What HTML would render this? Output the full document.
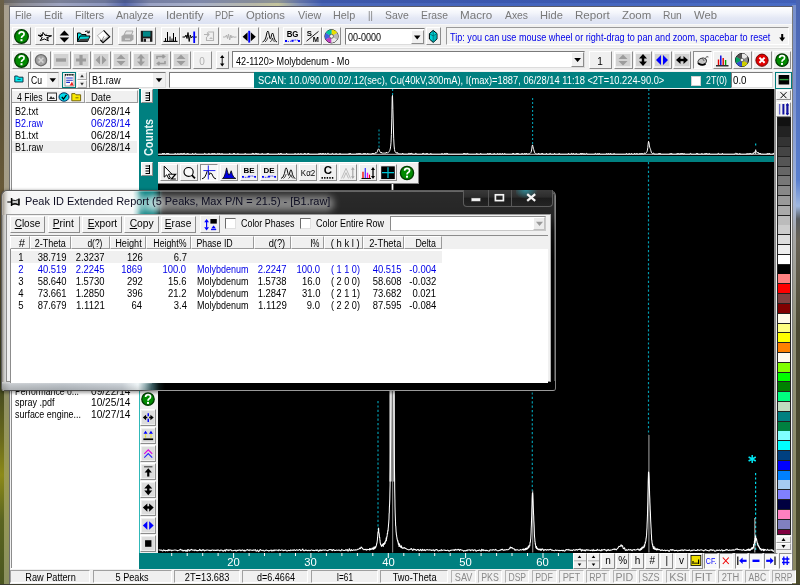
<!DOCTYPE html><html><head><meta charset="utf-8"><title>XRD</title><style>
*{box-sizing:border-box;margin:0;padding:0}
html,body{width:800px;height:585px;overflow:hidden}
#w{position:absolute;left:0;top:0;width:800px;height:585px;overflow:hidden;filter:blur(0.4px)}
body{position:relative;font-family:"Liberation Sans",sans-serif;font-size:11px;color:#000;background:#5b76bd}
.a{position:absolute}
.t{position:absolute;white-space:nowrap;line-height:1}
.btn{position:absolute;background:#f0f0f0;border:1px solid;border-color:#fff #8c8c8c #8c8c8c #fff;overflow:hidden}
.btn svg,.btnp svg,.fl svg{position:absolute;left:0;top:0}
.btnp{position:absolute;background:#f8f8f8;border:1px solid;border-color:#8c8c8c #fff #fff #8c8c8c;overflow:hidden}
.fl{position:absolute;overflow:hidden}
.sunk{position:absolute;background:#fff;border:1px solid;border-color:#7a7a7a #dcdcdc #dcdcdc #7a7a7a}
.cell{position:absolute;background:#f0f0f0;border:1px solid;border-color:#fff #9a9a9a #9a9a9a #fff}
.sb{position:absolute;background:#f0f0f0;border:1px solid;border-color:#a0a0a0 #fff #fff #a0a0a0}
</style></head><body><div id="w">
<div class="a" style="left:0px;top:0px;width:800px;height:7px;background:linear-gradient(90deg,#7c7466 0,#8c8c94 20px,#9ea4c0 60px,#8a94bc 105px,#5566a8 125px,#9aa2c4 150px,#a8b0c8 200px,#b8b8a8 255px,#c4c49c 278px,#8090b8 300px,#4a66b8 322px,#4464bc 500px,#4a6cc4 800px);"></div>
<div class="a" style="left:0px;top:0px;width:800px;height:2.5px;background:linear-gradient(90deg,rgba(60,60,60,.35),rgba(40,60,140,.35) 320px,rgba(40,60,150,.25));"></div>
<div class="a" style="left:0px;top:0px;width:4px;height:585px;background:linear-gradient(#6a6048,#5a5034 100px,#6a5a38 200px,#5a5230 300px,#3e4420 380px,#6a6a1c 440px,#8c8a18 475px,#5a6420 520px,#4a5620 585px);"></div>
<div class="a" style="left:3.5px;top:5px;width:5.5px;height:580px;background:linear-gradient(#a8a090,#a49c86 200px,#98947a 320px,#8c8c66 380px,#9c9c52 470px,#8a9060 580px);"></div>
<div class="a" style="left:796px;top:0px;width:4px;height:585px;background:linear-gradient(#4a64b0,#5a80d0 180px,#a0b8e0 206px,#585c60 219px,#6a6458 240px,#4c4a34 330px,#4a4a2c 585px);"></div>
<div class="a" style="left:792px;top:5px;width:4px;height:580px;background:linear-gradient(#7890cc,#7c94d0 100px,#a8b8d8 200px,#a8a8a8 228px,#909078 330px,#8a8860 580px);"></div>
<div class="a" style="left:9px;top:5.5px;width:783.5px;height:578.5px;background:#f0f0f0;border-left:1px solid #6a6a6a;border-top:1px solid #5a5a66;border-right:1px solid #7a7a7a"></div>
<div class="a" style="left:10px;top:6.5px;width:781.5px;height:17.5px;background:linear-gradient(#ffffff,#f3f5fb 35%,#e4e8f5 65%,#dce2f3);"></div>
<div class="a" style="left:10px;top:24px;width:781.5px;height:1px;background:#f8f8f8;"></div>
<div class="t" style="left:15.00px;top:10.29px;font-size:11px;color:#787878;transform:scaleX(0.942);transform-origin:left center;">File</div>
<div class="t" style="left:44.00px;top:10.29px;font-size:11px;color:#787878;transform:scaleX(0.976);transform-origin:left center;">Edit</div>
<div class="t" style="left:74.50px;top:10.29px;font-size:11px;color:#787878;transform:scaleX(0.975);transform-origin:left center;">Filters</div>
<div class="t" style="left:115.50px;top:10.29px;font-size:11px;color:#787878;transform:scaleX(0.958);transform-origin:left center;">Analyze</div>
<div class="t" style="left:165.50px;top:10.29px;font-size:11px;color:#787878;transform:scaleX(1.057);transform-origin:left center;">Identify</div>
<div class="t" style="left:215.00px;top:10.29px;font-size:11px;color:#787878;transform:scaleX(0.850);transform-origin:left center;">PDF</div>
<div class="t" style="left:246.20px;top:10.29px;font-size:11px;color:#787878;transform:scaleX(1.024);transform-origin:left center;">Options</div>
<div class="t" style="left:297.50px;top:10.29px;font-size:11px;color:#787878;transform:scaleX(0.981);transform-origin:left center;">View</div>
<div class="t" style="left:333.20px;top:10.29px;font-size:11px;color:#787878;transform:scaleX(0.986);transform-origin:left center;">Help</div>
<div class="t" style="left:368.20px;top:10.29px;font-size:11px;color:#787878;transform:scaleX(0.840);transform-origin:left center;">||</div>
<div class="t" style="left:385.00px;top:10.29px;font-size:11px;color:#787878;transform:scaleX(0.945);transform-origin:left center;">Save</div>
<div class="t" style="left:420.50px;top:10.29px;font-size:11px;color:#787878;transform:scaleX(0.940);transform-origin:left center;">Erase</div>
<div class="t" style="left:460.20px;top:10.29px;font-size:11px;color:#787878;transform:scaleX(1.057);transform-origin:left center;">Macro</div>
<div class="t" style="left:505.00px;top:10.29px;font-size:11px;color:#787878;transform:scaleX(0.940);transform-origin:left center;">Axes</div>
<div class="t" style="left:540.20px;top:10.29px;font-size:11px;color:#787878;transform:scaleX(1.008);transform-origin:left center;">Hide</div>
<div class="t" style="left:575.20px;top:10.29px;font-size:11px;color:#787878;transform:scaleX(1.054);transform-origin:left center;">Report</div>
<div class="t" style="left:621.50px;top:10.29px;font-size:11px;color:#787878;transform:scaleX(1.039);transform-origin:left center;">Zoom</div>
<div class="t" style="left:663.20px;top:10.29px;font-size:11px;color:#787878;transform:scaleX(0.932);transform-origin:left center;">Run</div>
<div class="t" style="left:694.00px;top:10.29px;font-size:11px;color:#787878;transform:scaleX(1.026);transform-origin:left center;">Web</div>
<div class="a" style="left:10px;top:47px;width:782px;height:1px;background:#fafafa;"></div>
<div class="a" style="left:10px;top:48px;width:782px;height:1px;background:#dcdcdc;"></div>
<div class="a" style="left:10px;top:70px;width:782px;height:1px;background:#fafafa;"></div>
<div class="btn" style="left:11.5px;top:27px;width:19px;height:18px;"><svg width="17" height="16" viewBox="0 0 17 16" ><circle cx="8.5" cy="8.5" r="6.8" fill="#008a00" stroke="#003c00" stroke-width="1.3"/><path d="M6.1 6.3 Q6.1 3.9000000000000004 8.5 3.9000000000000004 Q11.1 3.9000000000000004 11.1 6.1 Q11.1 7.5 9.4 8.3 Q8.5 8.9 8.5 10.1" fill="none" stroke="#fff" stroke-width="1.65" stroke-linecap="butt"/><rect x="7.5" y="11.2" width="2" height="2" fill="#fff"/></svg></div>
<div class="btn" style="left:35px;top:27px;width:19px;height:18px;"><svg width="17" height="16" viewBox="0 0 17 16" ><path d="M2.2 7.2 L6.4 7.6 L7 4.4 L9.2 7.4 L15.6 7.8 L10.8 9.6 L12.4 12.8 L8.4 11 L4.2 12.6 L6.2 9.4 Z" fill="none" stroke="#000" stroke-width="1"/><path d="M6.4 7.6 L4.6 5.6 M9.2 7.4 L10.6 5.8 M10.8 9.6 L13 10.2" stroke="#000" stroke-width="0.8"/></svg></div>
<div class="btn" style="left:54.6px;top:27px;width:19px;height:18px;"><svg width="17" height="16" viewBox="0 0 17 16" ><path d="M8.4 2.6 L13.2 7.4 L3.6 7.4 Z M8.4 14.4 L13.2 9.4 L3.6 9.4 Z" fill="#000"/></svg></div>
<div class="btn" style="left:74.3px;top:27px;width:19px;height:18px;"><svg width="17" height="16" viewBox="0 0 17 16" ><path d="M2.5 13.5 L2.5 5 L5.5 5 L6.5 6.5 L11 6.5 L11 8" fill="#00e0e0" stroke="#000" stroke-width="1"/><path d="M2.5 13.5 L5 8 L15 8 L12.5 13.5 Z" fill="#00d8d8" stroke="#000" stroke-width="1"/><path d="M3 13.5 L12.5 13.5 L14 10.5 L5 11 Z" fill="#404040"/><path d="M10 3.5 Q12.5 2 14 4.5 M14.2 2.6 L14.2 5 L12 4.6" fill="none" stroke="#000" stroke-width="0.9"/></svg></div>
<div class="btn" style="left:94px;top:27px;width:19px;height:18px;"><svg width="17" height="16" viewBox="0 0 17 16" ><path d="M2.4 7.6 L8.6 2.6 L14.4 8.6 L8 14.2 Z" fill="#fff" stroke="#909090" stroke-width="0.7"/><path d="M9 2.8 L14.4 8.6 L8 14.2 L6.2 12.4 L12 8.6 Z" fill="#c8c8c8"/><path d="M8.6 2.4 L14.7 8.6 L8 14.6 L5.4 12" fill="none" stroke="#000" stroke-width="1.2"/><path d="M8 14.2 Q6.6 11 9 8.4" fill="none" stroke="#666" stroke-width="0.7"/></svg></div>
<div class="btn" style="left:117.6px;top:27px;width:19px;height:18px;"><svg width="17" height="16" viewBox="0 0 17 16" ><path d="M5 7 L7 3 L14 3 L12.5 7 Z" fill="#e4e4e4" stroke="#a0a0a0" stroke-width="0.9"/><path d="M2.5 8 L5 6.8 L14.5 6.8 L14.5 11.5 L12 13.5 L2.5 13.5 Z" fill="#a6a6a6"/><rect x="6" y="10.5" width="5" height="1.3" fill="#dcdcdc"/></svg></div>
<div class="btn" style="left:137.4px;top:27px;width:19px;height:18px;"><svg width="17" height="16" viewBox="0 0 17 16" ><rect x="2.8" y="2.8" width="11.6" height="11" fill="#1c1c1c"/><rect x="5" y="3.4" width="7.4" height="5.2" fill="#008888"/><rect x="5" y="10.4" width="7" height="3.4" fill="#e8e8e8"/><rect x="5.6" y="10.8" width="2.4" height="3" fill="#1c1c1c"/></svg></div>
<div class="btn" style="left:160.6px;top:27px;width:19px;height:18px;"><svg width="17" height="16" viewBox="0 0 17 16" ><path d="M1.5 13.4 H15.5" stroke="#000" stroke-width="1.1"/><path d="M3.5 13 V10 M5.5 13 V4 M8 13 V8.5 M10 13 V10.5 M11.5 13 V5 M13.5 13 V9" stroke="#000" stroke-width="1"/></svg></div>
<div class="btn" style="left:180.2px;top:27px;width:19px;height:18px;"><svg width="17" height="16" viewBox="0 0 17 16" ><path d="M1.5 9 H4 L5 7 L6 10.5 L7 4.5 L8.2 13.5 L9.3 7 L10.3 10 L11.2 8.6 L12.5 9.2 L15.8 9" fill="none" stroke="#000" stroke-width="1"/><path d="M13.2 3.5 V15" stroke="#0000ff" stroke-width="1.8"/></svg></div>
<div class="btn" style="left:200px;top:27px;width:19px;height:18px;"><svg width="17" height="16" viewBox="0 0 17 16" ><path d="M7 4 H12.5 V12.5 H5.5 V9" fill="none" stroke="#b4b4b4" stroke-width="1.1"/><path d="M3 6.5 H7.5 M6 4.5 L8 6.5 L6 8.5" fill="none" stroke="#b4b4b4" stroke-width="1.1"/><path d="M8 11 L10 9 L12 11 Z" fill="#bcbcbc"/></svg></div>
<div class="btn" style="left:219.8px;top:27px;width:19px;height:18px;"><svg width="17" height="16" viewBox="0 0 17 16" ><path d="M2 9 H4.5 L5.5 7 L6.5 10.5 L7.5 6 L8.7 12 L9.8 7 L10.8 10 L11.7 8.4 L13 9.2 L15.5 9" fill="none" stroke="#b0b0b0" stroke-width="1"/></svg></div>
<div class="btn" style="left:239.8px;top:27px;width:19px;height:18px;"><svg width="17" height="16" viewBox="0 0 17 16" ><path d="M8.2 2.8 V14.6" stroke="#0000ff" stroke-width="1.9"/><path d="M1.6 8.7 L6.6 4.2 V13.2 Z M14.8 8.7 L9.8 4.2 V13.2 Z" fill="#000"/></svg></div>
<div class="btn" style="left:259.5px;top:27px;width:19px;height:18px;"><svg width="17" height="16" viewBox="0 0 17 16" ><path d="M1.5 14 Q4 13.5 5 9 Q6 3 6.8 3 Q7.6 3 8.6 9 Q9.3 12.5 10 9.5 Q10.8 5 11.5 5 Q12.3 5 13.2 10 Q14 13.8 16 14" fill="none" stroke="#000" stroke-width="0.95"/><path d="M4 14 Q6 13 6.8 9.5 M9.2 14 Q10.8 13 11.5 10 Q12 13 13.6 14" fill="none" stroke="#000" stroke-width="0.7"/></svg></div>
<div class="btn" style="left:283px;top:27px;width:19px;height:18px;"><svg width="17" height="16" viewBox="0 0 17 16" ><text x="8.6" y="9.4" font-size="9" font-weight="bold" text-anchor="middle" font-family="Liberation Sans" fill="#000" textLength="11.8" lengthAdjust="spacingAndGlyphs">BG</text><path d="M1.5 12.8 Q5 14.2 8.5 12.6 Q12 11.4 15.5 12.8" fill="none" stroke="#0000ff" stroke-width="0.9" stroke-dasharray="1.3 1"/><rect x="1" y="12" width="2" height="2" fill="#0000ff"/><rect x="7.5" y="11.8" width="2" height="2" fill="#0000ff"/><rect x="14" y="12" width="2" height="2" fill="#0000ff"/></svg></div>
<div class="btn" style="left:302.6px;top:27px;width:19px;height:18px;"><svg width="17" height="16" viewBox="0 0 17 16" ><text x="5.4" y="7.6" font-size="7.8" font-weight="bold" text-anchor="middle" font-family="Liberation Sans" fill="#000">S</text><text x="11.8" y="14.2" font-size="7.4" font-weight="bold" text-anchor="middle" font-family="Liberation Sans" fill="#000">M</text><path d="M2.5 13.2 L14.5 3.4" stroke="#000" stroke-width="0.9"/></svg></div>
<div class="btn" style="left:322.4px;top:27px;width:19px;height:18px;"><svg width="17" height="16" viewBox="0 0 17 16" ><circle cx="8.5" cy="8.3" r="6.6" fill="#c8c8c8" stroke="#000" stroke-width="0.9"/><path d="M8.5 8.3 L8.5 1.7 A6.6 6.6 0 0 1 14.2 5 Z" fill="#e8e000"/><path d="M8.5 8.3 L2.8 5 A6.6 6.6 0 0 1 8.5 1.7 Z" fill="#00c8a0"/><path d="M8.5 8.3 L2.8 11.6 A6.6 6.6 0 0 1 2.8 5 Z" fill="#4060e0"/><path d="M8.5 8.3 L8.5 14.9 A6.6 6.6 0 0 1 2.8 11.6 Z" fill="#c040c0"/><path d="M8.5 8.3 L14.2 11.6 A6.6 6.6 0 0 1 8.5 14.9 Z" fill="#e8e8e8"/><path d="M8.5 8.3 L14.2 5 A6.6 6.6 0 0 1 14.2 11.6 Z" fill="#b8b8b8"/><circle cx="8.5" cy="8.3" r="2" fill="#f0f0f0" stroke="#444" stroke-width="0.7"/></svg></div>
<div class="sunk" style="left:345px;top:28px;width:79.5px;height:17px"></div>
<div class="t" style="left:348.00px;top:33.04px;font-size:10px;color:#000;transform:scaleX(0.899);transform-origin:left center;">00-0000</div>
<div class="btn" style="left:411px;top:30px;width:12.5px;height:14px;"><svg width="10" height="12" viewBox="0 0 10 12" ><path d="M2 4.5 H8.5 L5.2 8.5 Z" fill="#000"/></svg></div>
<div class="btn" style="left:426px;top:27px;width:14.5px;height:18px;"><svg width="13" height="16" viewBox="0 0 13 16" ><path d="M6.2 2.4 L10 5.6 L10 11 L6.2 14.4 L2.4 11 L2.4 5.6 Z" fill="#00d4d8" stroke="#000" stroke-width="1"/><path d="M6.2 2.4 V14.4 M2.4 5.6 L6.2 8 L10 5.6" fill="none" stroke="#005c60" stroke-width="0.8"/><path d="M6.2 8 L10 5.6 L10 11 L6.2 14.4 Z" fill="#009ca4" opacity="0.55"/></svg></div>
<div class="sunk" style="left:445.5px;top:27px;width:343px;height:18px;background:#f4f4f4;border-color:#9a9a9a #fff #fff #9a9a9a"></div>
<div class="t" style="left:449.60px;top:33.04px;font-size:10px;color:#0000e8;transform:scaleX(0.910);transform-origin:left center;">Tip: you can use mouse wheel or right-drag to pan and zoom, spacebar to reset</div>
<svg class="a" style="left:776px;top:30px" width="12" height="13" viewBox="0 0 12 13"><path d="M6.2 4 V9" stroke="#000" stroke-width="2"/><path d="M3.2 7.6 H9.2 L6.2 11.4 Z" fill="#000"/></svg>
<div class="btn" style="left:11.5px;top:50.5px;width:19px;height:18px;"><svg width="17" height="16" viewBox="0 0 17 16" ><circle cx="8.5" cy="8.5" r="6.8" fill="#008a00" stroke="#003c00" stroke-width="1.3"/><path d="M6.1 6.3 Q6.1 3.9000000000000004 8.5 3.9000000000000004 Q11.1 3.9000000000000004 11.1 6.1 Q11.1 7.5 9.4 8.3 Q8.5 8.9 8.5 10.1" fill="none" stroke="#fff" stroke-width="1.65" stroke-linecap="butt"/><rect x="7.5" y="11.2" width="2" height="2" fill="#fff"/></svg></div>
<div class="btn" style="left:32px;top:50.5px;width:18.5px;height:18px;"><svg width="16" height="16" viewBox="0 0 16 16" ><circle cx="8" cy="8.2" r="5.6" fill="#a4a4a4" stroke="#6c6c6c" stroke-width="1.3"/><path d="M5.6 5.8 L10.4 10.6 M10.4 5.8 L5.6 10.6" stroke="#d4d4d4" stroke-width="1.5"/></svg></div>
<div class="btn" style="left:52px;top:50.5px;width:18.5px;height:18px;"><svg width="16" height="16" viewBox="0 0 16 16" ><rect x="1" y="2" width="14.4" height="12.2" fill="#d2d2d2"/><rect x="3" y="6.3" width="10" height="3.4" fill="#9c9c9c"/></svg></div>
<div class="btn" style="left:72px;top:50.5px;width:18.5px;height:18px;"><svg width="16" height="16" viewBox="0 0 16 16" ><rect x="1" y="2" width="14.4" height="12.2" fill="#d2d2d2"/><path d="M3 8 H13 M8 3 V13" stroke="#9c9c9c" stroke-width="3.2"/></svg></div>
<div class="btn" style="left:92px;top:50.5px;width:18.5px;height:18px;"><svg width="16" height="16" viewBox="0 0 16 16" ><rect x="1" y="2" width="14.4" height="12.2" fill="#d2d2d2"/><path d="M2.5 8 L7 3.5 V12.5 Z M13.5 8 L9 3.5 V12.5 Z" fill="#9c9c9c"/></svg></div>
<div class="btn" style="left:112px;top:50.5px;width:18.5px;height:18px;"><svg width="16" height="16" viewBox="0 0 16 16" ><rect x="1" y="2" width="14.4" height="12.2" fill="#d2d2d2"/><path d="M8 2.5 L12.5 7 H3.5 Z M8 13.5 L12.5 9 H3.5 Z" fill="#9c9c9c"/></svg></div>
<div class="btn" style="left:132px;top:50.5px;width:18.5px;height:18px;"><svg width="16" height="16" viewBox="0 0 16 16" ><rect x="1" y="2" width="14.4" height="12.2" fill="#d2d2d2"/><path d="M8 2 L12 6.5 H4 Z M8 14 L12 9.5 H4 Z" fill="#9c9c9c"/><path d="M8 5 V11" stroke="#9c9c9c" stroke-width="2.4"/></svg></div>
<div class="btn" style="left:152px;top:50.5px;width:18.5px;height:18px;"><svg width="16" height="16" viewBox="0 0 16 16" ><rect x="1" y="2" width="14.4" height="12.2" fill="#d2d2d2"/><path d="M4 7 V4.5 H11 M9.5 2.8 L11.6 4.5 L9.5 6.2 M12 9 V11.5 H5 M6.5 9.8 L4.4 11.5 L6.5 13.2" fill="none" stroke="#9c9c9c" stroke-width="1.6"/></svg></div>
<div class="btn" style="left:172px;top:50.5px;width:18.5px;height:18px;"><svg width="16" height="16" viewBox="0 0 16 16" ><rect x="1" y="2" width="14.4" height="12.2" fill="#d2d2d2"/><path d="M8 2.5 L12.5 7 H3.5 Z M8 13.5 L12.5 9 H3.5 Z" fill="#9c9c9c"/></svg></div>
<div class="btn" style="left:192.5px;top:50.5px;width:19.5px;height:18px;"></div>
<div class="t" style="left:199.22px;top:57.14px;font-size:10px;color:#b0b0b0;">0</div>
<div class="btn" style="left:216px;top:50.5px;width:12.5px;height:18px;"><svg width="10" height="16" viewBox="0 0 10 16" ><path d="M5.2 3 L7.4 6 H3 Z M5.2 14.6 L7.4 11.6 H3 Z" fill="#000"/><path d="M5.2 5.5 V12" stroke="#000" stroke-width="0.9"/></svg></div>
<div class="sunk" style="left:231.5px;top:51px;width:353.5px;height:17.3px"></div>
<div class="t" style="left:236.20px;top:57.14px;font-size:10px;color:#000;transform:scaleX(0.911);transform-origin:left center;">42-1120&gt; Molybdenum - Mo</div>
<div class="btn" style="left:570.5px;top:51.5px;width:13px;height:15px;"><svg width="11" height="13" viewBox="0 0 11 13" ><path d="M2.2 5 H9 L5.6 9 Z" fill="#000"/></svg></div>
<div class="btn" style="left:589px;top:50.5px;width:23px;height:18px;"></div>
<div class="t" style="left:597.22px;top:57.14px;font-size:10px;color:#000;">1</div>
<div class="btn" style="left:614px;top:50.5px;width:18.5px;height:18px;"><svg width="16" height="16" viewBox="0 0 16 16" ><rect x="1" y="2" width="14.4" height="12.2" fill="#d2d2d2"/><path d="M8 2.5 L12.5 7 H3.5 Z M8 13.5 L12.5 9 H3.5 Z" fill="#9c9c9c"/></svg></div>
<div class="btn" style="left:633.6px;top:50.5px;width:18.5px;height:18px;"><svg width="16" height="16" viewBox="0 0 16 16" ><rect x="1" y="2" width="14.4" height="12.2" fill="#d2d2d2"/><path d="M8 2 L12 6.5 H4 Z M8 14 L12 9.5 H4 Z" fill="#000"/><path d="M8 5 V11" stroke="#000" stroke-width="2.4"/></svg></div>
<div class="btn" style="left:653.2px;top:50.5px;width:18.5px;height:18px;"><svg width="16" height="16" viewBox="0 0 16 16" ><rect x="1" y="2" width="14.4" height="12.2" fill="#d2d2d2"/><path d="M2 8 L7 3 V13 Z M14 8 L9 3 V13 Z" fill="#0000ff"/></svg></div>
<div class="btn" style="left:672.8px;top:50.5px;width:18.5px;height:18px;"><svg width="16" height="16" viewBox="0 0 16 16" ><rect x="1" y="2" width="14.4" height="12.2" fill="#d2d2d2"/><path d="M2 8 L6.5 4 V12 Z M14 8 L9.5 4 V12 Z" fill="#000"/><path d="M5 8 H11" stroke="#000" stroke-width="2.4"/></svg></div>
<div class="btnp" style="left:693px;top:50.5px;width:18.5px;height:18px;"><svg width="16" height="16" viewBox="0 0 16 16" ><ellipse cx="8.2" cy="9.4" rx="4.4" ry="3.3" fill="#c4c4c4" stroke="#222" stroke-width="0.9" transform="rotate(-22 8.2 9.4)"/><path d="M4 11.2 Q7.4 14 11.6 12" fill="none" stroke="#000" stroke-width="1.7"/><path d="M8.4 6.4 L10.2 9" stroke="#333" stroke-width="0.7"/><path d="M11.4 6 Q13 3.8 14.4 5" fill="none" stroke="#222" stroke-width="0.8"/></svg></div>
<div class="btn" style="left:713px;top:50.5px;width:18.5px;height:18px;"><svg width="16" height="16" viewBox="0 0 16 16" ><path d="M2 13.8 H14.5" stroke="#000" stroke-width="1.2"/><path d="M4.5 13 V7.5" stroke="#e00000" stroke-width="1.4"/><path d="M6.8 13 V3.5" stroke="#0000e0" stroke-width="1.4"/><path d="M9.2 13 V6" stroke="#e00000" stroke-width="1.4"/><path d="M11.6 13 V8" stroke="#00a000" stroke-width="1.4"/></svg></div>
<div class="btn" style="left:733px;top:50.5px;width:18.5px;height:18px;"><svg width="16" height="16" viewBox="0 0 16 16" ><circle cx="8" cy="8" r="6.5" fill="#909090" stroke="#000" stroke-width="1"/><path d="M8 8 L8 1.5 A6.5 6.5 0 0 1 13.6 4.7 Z" fill="#e8e8e8"/><path d="M8 8 L2.4 11.3 A6.5 6.5 0 0 1 2.4 4.7 Z" fill="#00a060"/><path d="M8 8 L8 14.5 A6.5 6.5 0 0 1 2.4 11.3 Z" fill="#3050d0"/><path d="M8 8 L13.6 11.3 A6.5 6.5 0 0 1 8 14.5 Z" fill="#d0d000"/><path d="M8 8 L2.4 4.7 A6.5 6.5 0 0 1 8 1.5 Z" fill="#505050"/><circle cx="8" cy="8" r="1.8" fill="#f0f0f0" stroke="#333" stroke-width="0.6"/></svg></div>
<div class="btn" style="left:753px;top:50.5px;width:18.5px;height:18px;"><svg width="16" height="16" viewBox="0 0 16 16" ><circle cx="8" cy="8.2" r="6.1" fill="#e00000" stroke="#700000" stroke-width="1"/><path d="M5.4 5.6 L10.6 10.8 M10.6 5.6 L5.4 10.8" stroke="#fff" stroke-width="2"/></svg></div>
<div class="btn" style="left:772.5px;top:50.5px;width:18.5px;height:18px;"><svg width="16" height="16" viewBox="0 0 16 16" ><circle cx="8" cy="8.2" r="6.2" fill="#008a00" stroke="#003c00" stroke-width="1.3"/><path d="M5.6 5.999999999999999 Q5.6 3.5999999999999996 8 3.5999999999999996 Q10.6 3.5999999999999996 10.6 5.799999999999999 Q10.6 7.199999999999999 8.9 7.999999999999999 Q8 8.6 8 9.799999999999999" fill="none" stroke="#fff" stroke-width="1.65" stroke-linecap="butt"/><rect x="7" y="10.899999999999999" width="2" height="2" fill="#fff"/></svg></div>
<svg class="a" style="left:13.7px;top:75.3px" width="10" height="8" viewBox="0 0 10 8"><path d="M0.8 7 V1 H3.6 L4.6 2.2 H9 V7 Z" fill="#00e8ec" stroke="#103848" stroke-width="1"/><path d="M3.4 4.4 H6.6" stroke="#103848" stroke-width="0.9"/></svg>
<div class="sunk" style="left:28px;top:72px;width:31px;height:16px"></div>
<div class="t" style="left:31.00px;top:76.14px;font-size:10px;color:#000;transform:scaleX(0.860);transform-origin:left center;">Cu</div>
<div class="btn" style="left:46.5px;top:73px;width:11.5px;height:14px;border-color:#f0f0f0"><svg width="10" height="12" viewBox="0 0 10 12" ><path d="M1.5 4.2 H8 L4.8 8.2 Z" fill="#000"/></svg></div>
<div class="a" style="left:62px;top:71.5px;width:14px;height:16.5px;background:#f0f0f0;border:1.5px solid #007c7c"></div>
<svg class="a" style="left:63.5px;top:73px" width="11" height="14" viewBox="0 0 11 14"><rect x="1" y="1.6" width="9" height="11.4" fill="#fff" stroke="#666" stroke-width="0.6"/><path d="M1 1.8 H10" stroke="#111" stroke-width="1.8" stroke-dasharray="1.1 0.7"/><path d="M2.2 5 H8.8 M2.2 7.2 H8.8 M2.2 9.4 H6" stroke="#2030c8" stroke-width="1.1"/><path d="M5.6 12.4 L8 8.6 L9.6 12.4 Z" fill="#f02020"/></svg>
<div class="btn" style="left:76.8px;top:72px;width:10px;height:8px;border-color:#fff #a8a8a8 #a8a8a8 #fff"><svg width="8" height="6" viewBox="0 0 8 6" ><path d="M4 1.6 L5.8 4.2 H2.2 Z" fill="#333"/></svg></div>
<div class="btn" style="left:76.8px;top:80px;width:10px;height:8px;border-color:#fff #a8a8a8 #a8a8a8 #fff"><svg width="8" height="6" viewBox="0 0 8 6" ><path d="M4 4.4 L5.8 1.8 H2.2 Z" fill="#333"/></svg></div>
<div class="sunk" style="left:88.5px;top:72px;width:77px;height:16px"></div>
<div class="t" style="left:92.00px;top:76.14px;font-size:10px;color:#000;transform:scaleX(0.916);transform-origin:left center;">B1.raw</div>
<div class="btn" style="left:152.5px;top:73px;width:12px;height:14px;border-color:#f0f0f0"><svg width="10" height="12" viewBox="0 0 10 12" ><path d="M1.8 4.2 H8.3 L5 8.2 Z" fill="#000"/></svg></div>
<div class="sunk" style="left:168.5px;top:72px;width:86px;height:16px"></div>
<div class="a" style="left:254px;top:72px;width:476.5px;height:16px;background:#008080;"></div>
<div class="t" style="left:258.00px;top:76.14px;font-size:10px;color:#fff;transform:scaleX(0.931);transform-origin:left center;">SCAN: 10.0/90.0/0.02/.12(sec), Cu(40kV,300mA), I(max)=1887, 06/28/14 11:18 &lt;2T=10.224-90.0&gt;</div>
<div class="a" style="left:690.5px;top:75.5px;width:10.5px;height:10.5px;background:#fff;border:1px solid #d0d0d0"></div>
<div class="t" style="left:706.00px;top:76.14px;font-size:10px;color:#fff;transform:scaleX(0.879);transform-origin:left center;">2T(0)</div>
<div class="sunk" style="left:730.5px;top:72px;width:42px;height:16px"></div>
<div class="t" style="left:733.00px;top:76.14px;font-size:10px;color:#000;transform:scaleX(0.971);transform-origin:left center;">0.0</div>
<div class="a" style="left:775px;top:71.5px;width:16.5px;height:17px;background:#f0f0f0;border:1.5px solid #007c7c"></div>
<svg class="a" style="left:777.5px;top:74px" width="12" height="12" viewBox="0 0 12 12"><rect x="0.6" y="1" width="10.6" height="9.5" fill="#000"/><path d="M1.5 5.6 H10.5" stroke="#30a040" stroke-width="1.4"/></svg>
<div class="a" style="left:11px;top:89px;width:128px;height:479.5px;background:#fff;"></div>
<div class="cell" style="left:11px;top:90px;width:73.5px;height:13px"></div>
<div class="cell" style="left:84.5px;top:90px;width:53px;height:13px"></div>
<div class="a" style="left:137.5px;top:90px;width:1.5px;height:13px;background:#f0f0f0;"></div>
<div class="a" style="left:10.6px;top:88.2px;width:128.4px;height:1px;background:#787878;"></div>
<div class="a" style="left:10.6px;top:88.2px;width:0.9px;height:480px;background:#8c8c8c;"></div>
<div class="t" style="left:17.00px;top:92.64px;font-size:10px;color:#000;transform:scaleX(0.866);transform-origin:left center;">4 Files</div>
<div class="t" style="left:90.50px;top:92.64px;font-size:10px;color:#000;transform:scaleX(0.947);transform-origin:left center;">Date</div>
<svg class="a" style="left:47px;top:92.3px" width="35" height="10" viewBox="0 0 35 10"><rect x="0.5" y="1" width="9" height="7.5" fill="#f4f4f4" stroke="#222" stroke-width="0.9"/><path d="M2 7 L4 4 L5.5 6 L6.5 5 L8 7 Z" fill="#333"/><ellipse cx="17" cy="5" rx="5" ry="4.2" fill="#00d8e8" stroke="#003060" stroke-width="1"/><path d="M14.8 5 L16.5 7 L19.5 2.8" fill="none" stroke="#000" stroke-width="1.2"/><path d="M24.8 8.8 V1.6 H28 L29 2.8 H33.6 V8.8 Z" fill="#f8e800" stroke="#6a5a00" stroke-width="0.9"/><path d="M28.5 5.8 H31.5" stroke="#6a5a00" stroke-width="0.9"/></svg>
<div class="a" style="left:12px;top:140.5px;width:125px;height:12px;background:#efefef;"></div>
<div class="t" style="left:15.00px;top:106.64px;font-size:10px;color:#000;transform:scaleX(0.907);transform-origin:left center;">B2.txt</div>
<div class="t" style="left:90.50px;top:106.64px;font-size:10px;color:#000;transform:scaleX(1.015);transform-origin:left center;">06/28/14</div>
<div class="t" style="left:15.00px;top:118.64px;font-size:10px;color:#0000e8;transform:scaleX(0.900);transform-origin:left center;">B2.raw</div>
<div class="t" style="left:90.50px;top:118.64px;font-size:10px;color:#0000e8;transform:scaleX(1.015);transform-origin:left center;">06/28/14</div>
<div class="t" style="left:15.00px;top:130.64px;font-size:10px;color:#000;transform:scaleX(0.907);transform-origin:left center;">B1.txt</div>
<div class="t" style="left:90.50px;top:130.64px;font-size:10px;color:#000;transform:scaleX(1.015);transform-origin:left center;">06/28/14</div>
<div class="t" style="left:15.00px;top:142.64px;font-size:10px;color:#000;transform:scaleX(0.900);transform-origin:left center;">B1.raw</div>
<div class="t" style="left:90.50px;top:142.64px;font-size:10px;color:#000;transform:scaleX(1.015);transform-origin:left center;">06/28/14</div>
<div class="t" style="left:15.00px;top:387.04px;font-size:10px;color:#000;transform:scaleX(0.866);transform-origin:left center;">Performance o...</div>
<div class="t" style="left:90.50px;top:387.04px;font-size:10px;color:#000;transform:scaleX(1.015);transform-origin:left center;">09/22/14</div>
<div class="t" style="left:15.00px;top:397.84px;font-size:10px;color:#000;transform:scaleX(0.899);transform-origin:left center;">spray .pdf</div>
<div class="t" style="left:90.50px;top:397.84px;font-size:10px;color:#000;transform:scaleX(1.015);transform-origin:left center;">10/25/14</div>
<div class="t" style="left:15.00px;top:409.54px;font-size:10px;color:#000;transform:scaleX(0.893);transform-origin:left center;">surface engine...</div>
<div class="t" style="left:90.50px;top:409.54px;font-size:10px;color:#000;transform:scaleX(1.015);transform-origin:left center;">10/27/14</div>
<div class="a" style="left:139px;top:88.5px;width:19px;height:302px;background:#008080;"></div>
<div class="btn" style="left:141px;top:88.5px;width:12px;height:14px;"><svg width="10" height="12" viewBox="0 0 10 12" ><path d="M7.5 2 V11 M3.5 3 H7.5 M3.5 5.5 H7.5 M3.5 8 H7.5 M3.5 10.5 H7.5" fill="none" stroke="#000" stroke-width="1"/></svg></div>
<div class="btn" style="left:141px;top:161.8px;width:12px;height:14px;"><svg width="10" height="12" viewBox="0 0 10 12" ><path d="M7.5 2 V11 M3.5 3 H7.5 M3.5 5.5 H7.5 M3.5 8 H7.5 M3.5 10.5 H7.5" fill="none" stroke="#000" stroke-width="1"/></svg></div>
<div class="t" style="left:143px;top:155.6px;font-size:12.5px;font-weight:bold;color:#eaf6f6;transform:rotate(-90deg) scaleX(0.86);transform-origin:left top">Counts</div>
<div class="a" style="left:139px;top:391px;width:18px;height:161.5px;background:#f0f0f0;"></div>
<div class="a" style="left:138.8px;top:391px;width:1px;height:161.5px;background:#30b8b8;"></div>
<svg class="a" style="left:139.9px;top:391px" width="16" height="16" viewBox="0 0 16 16"><circle cx="8" cy="8.2" r="6.2" fill="#008a00" stroke="#003c00" stroke-width="1.3"/><path d="M5.6 5.999999999999999 Q5.6 3.5999999999999996 8 3.5999999999999996 Q10.6 3.5999999999999996 10.6 5.799999999999999 Q10.6 7.199999999999999 8.9 7.999999999999999 Q8 8.6 8 9.799999999999999" fill="none" stroke="#fff" stroke-width="1.65" stroke-linecap="butt"/><rect x="7" y="10.899999999999999" width="2" height="2" fill="#fff"/></svg>
<div class="btn" style="left:139.8px;top:409px;width:16.6px;height:17px;"><svg width="14.5" height="15" preserveAspectRatio="none" viewBox="0 0 16 16"><rect x="1" y="1" width="14" height="14" fill="#dcdcdc"/><path d="M2 8 L5.6 5 V11 Z M14 8 L10.4 5 V11 Z" fill="#000"/><path d="M5 8 H7 M9 8 H11" stroke="#000" stroke-width="1.4"/><path d="M8 3.4 V6.6 M8 9.4 V12.8" stroke="#0000ff" stroke-width="1.6"/></svg></div>
<div class="btn" style="left:139.8px;top:427px;width:16.6px;height:17px;"><svg width="14.5" height="15" preserveAspectRatio="none" viewBox="0 0 16 16"><rect x="1" y="1" width="14" height="14" fill="#dcdcdc"/><path d="M5 3 L7.2 6.2 H2.8 Z M11 3 L13.2 6.2 H8.8 Z" fill="#0000ff"/><path d="M5 6.6 V10.4 M11 6.6 V10.4" stroke="#e4e000" stroke-width="1.5" stroke-dasharray="1.4 0.8"/><path d="M2.6 12 H13.4" stroke="#000" stroke-width="1.8"/></svg></div>
<div class="btn" style="left:139.8px;top:445px;width:16.6px;height:17px;"><svg width="14.5" height="15" preserveAspectRatio="none" viewBox="0 0 16 16"><rect x="1" y="1" width="14" height="14" fill="#dcdcdc"/><path d="M3.6 8.4 L8 4 L12.4 8.4" fill="none" stroke="#e000e0" stroke-width="1.25"/><path d="M3.6 12.4 L8 8 L12.4 12.4" fill="none" stroke="#2828ff" stroke-width="1.25"/></svg></div>
<div class="btn" style="left:139.8px;top:463px;width:16.6px;height:17px;"><svg width="14.5" height="15" preserveAspectRatio="none" viewBox="0 0 16 16"><rect x="1" y="1" width="14" height="14" fill="#dcdcdc"/><path d="M3.4 3 H12.6" stroke="#333" stroke-width="1.1"/><path d="M8 4.6 L12 9 H4 Z" fill="#000"/><path d="M8 8 V13.4" stroke="#000" stroke-width="2.4"/></svg></div>
<div class="btn" style="left:139.8px;top:481px;width:16.6px;height:17px;"><svg width="14.5" height="15" preserveAspectRatio="none" viewBox="0 0 16 16"><rect x="1" y="1" width="14" height="14" fill="#dcdcdc"/><path d="M8 2 L12.4 7 H3.6 Z M8 14 L12.4 9 H3.6 Z" fill="#000"/><path d="M8 5 V11" stroke="#000" stroke-width="2.6"/></svg></div>
<div class="btn" style="left:139.8px;top:499px;width:16.6px;height:17px;"><svg width="14.5" height="15" preserveAspectRatio="none" viewBox="0 0 16 16"><rect x="1" y="1" width="14" height="14" fill="#dcdcdc"/><path d="M2 8 L7 3.6 V12.4 Z M14 8 L9 3.6 V12.4 Z" fill="#000"/><path d="M5 8 H11" stroke="#000" stroke-width="2.6"/></svg></div>
<div class="btn" style="left:139.8px;top:517px;width:16.6px;height:17px;"><svg width="14.5" height="15" preserveAspectRatio="none" viewBox="0 0 16 16"><rect x="1" y="1" width="14" height="14" fill="#dcdcdc"/><path d="M2 8 L7 3.4 V12.6 Z M14 8 L9 3.4 V12.6 Z" fill="#0000ff"/></svg></div>
<div class="btn" style="left:139.8px;top:535px;width:16.6px;height:17px;"><svg width="14.5" height="15" preserveAspectRatio="none" viewBox="0 0 16 16"><rect x="1" y="1" width="14" height="14" fill="#dcdcdc"/><rect x="4.5" y="4.5" width="7" height="7" fill="#000"/></svg></div>
<div class="a" style="left:157.5px;top:88.5px;width:616.7px;height:67.5px;background:#000;"></div>
<div class="a" style="left:157.5px;top:156px;width:616.7px;height:6px;background:#008080;"></div>
<div class="a" style="left:157.5px;top:162px;width:616.7px;height:390.5px;background:#000;"></div>
<div class="a" style="left:139px;top:552.5px;width:434.5px;height:16px;background:#008080;"></div>
<svg class="a" style="left:158px;top:88.5px" width="616" height="67.5" viewBox="0 0 616 67.5"><path d="M221.0 40.5 V59.5" stroke="#009cb0" stroke-width="1.1" stroke-dasharray="2 2"/><path d="M234.6 0.0 V6.5" stroke="#009cb0" stroke-width="1.1" stroke-dasharray="2 2"/><path d="M374.6 9.0 V55.5" stroke="#009cb0" stroke-width="1.1" stroke-dasharray="2 2"/><path d="M490.8 0.0 V50.5" stroke="#009cb0" stroke-width="1.1" stroke-dasharray="2 2"/><path d="M597.7 54.5 V58.5" stroke="#00d8e8" stroke-width="1.1" stroke-dasharray="2 2"/><path d="M597.7 60.5 V65" stroke="#fff" stroke-width="1"/><path d="M0 65.3 H616" stroke="#c4c4c4" stroke-width="1"/><polyline points="0.6,65.2 1.0,65.2 1.4,65.2 1.7,65.2 2.1,65.2 2.5,65.2 2.9,65.2 3.3,65.2 3.7,65.2 4.1,65.2 4.5,64.3 4.8,65.2 5.2,64.3 5.6,65.2 6.0,65.2 6.4,64.3 6.8,65.2 7.2,65.2 7.5,65.2 7.9,65.2 8.3,65.2 8.7,64.3 9.1,65.2 9.5,64.3 9.9,65.2 10.3,65.2 10.6,64.3 11.0,65.2 11.4,65.2 11.8,65.2 12.2,65.2 12.6,65.2 13.0,65.2 13.3,65.2 13.7,65.2 14.1,65.2 14.5,65.2 14.9,65.2 15.3,65.2 15.7,65.2 16.1,65.2 16.4,65.2 16.8,65.2 17.2,64.3 17.6,65.2 18.0,65.2 18.4,65.2 18.8,65.2 19.1,65.2 19.5,65.2 19.9,64.3 20.3,65.2 20.7,65.2 21.1,65.2 21.5,65.2 21.9,65.2 22.2,64.3 22.6,65.2 23.0,65.2 23.4,65.2 23.8,64.3 24.2,65.2 24.6,65.2 24.9,65.2 25.3,64.3 25.7,65.2 26.1,64.3 26.5,64.3 26.9,65.2 27.3,65.2 27.7,65.2 28.0,65.2 28.4,65.2 28.8,65.2 29.2,64.3 29.6,65.2 30.0,64.3 30.4,65.2 30.8,65.2 31.1,65.2 31.5,65.2 31.9,65.2 32.3,65.2 32.7,65.2 33.1,65.2 33.5,65.2 33.8,65.2 34.2,65.2 34.6,64.3 35.0,65.2 35.4,65.2 35.8,65.2 36.2,65.2 36.6,65.2 36.9,65.2 37.3,64.3 37.7,64.3 38.1,65.2 38.5,65.2 38.9,65.2 39.3,65.2 39.6,65.2 40.0,65.2 40.4,65.2 40.8,65.2 41.2,65.2 41.6,65.2 42.0,65.2 42.4,65.2 42.7,65.2 43.1,65.2 43.5,65.2 43.9,65.2 44.3,65.2 44.7,65.2 45.1,65.2 45.4,65.2 45.8,65.2 46.2,65.2 46.6,64.3 47.0,64.3 47.4,65.2 47.8,65.2 48.2,65.2 48.5,65.2 48.9,65.2 49.3,65.2 49.7,65.2 50.1,65.2 50.5,65.2 50.9,64.3 51.2,65.2 51.6,65.2 52.0,65.2 52.4,65.2 52.8,65.2 53.2,65.2 53.6,65.2 54.0,64.3 54.3,65.2 54.7,65.2 55.1,64.3 55.5,65.2 55.9,65.2 56.3,65.2 56.7,64.3 57.0,65.2 57.4,65.2 57.8,65.2 58.2,65.2 58.6,65.2 59.0,65.2 59.4,65.2 59.8,64.3 60.1,64.3 60.5,65.2 60.9,65.2 61.3,65.2 61.7,64.3 62.1,65.2 62.5,65.2 62.8,65.2 63.2,65.2 63.6,65.2 64.0,64.3 64.4,65.2 64.8,65.2 65.2,65.2 65.6,65.2 65.9,65.2 66.3,65.2 66.7,65.2 67.1,65.2 67.5,65.2 67.9,65.2 68.3,65.2 68.6,65.2 69.0,65.2 69.4,65.2 69.8,65.2 70.2,65.2 70.6,65.2 71.0,65.2 71.4,65.2 71.7,64.3 72.1,65.2 72.5,65.2 72.9,65.2 73.3,65.2 73.7,65.2 74.1,65.2 74.4,65.2 74.8,65.2 75.2,65.2 75.6,64.3 76.0,65.2 76.4,64.3 76.8,65.2 77.2,65.2 77.5,65.2 77.9,65.2 78.3,65.2 78.7,65.2 79.1,65.2 79.5,65.2 79.9,64.3 80.2,65.2 80.6,65.2 81.0,65.2 81.4,65.2 81.8,65.2 82.2,65.2 82.6,65.2 83.0,65.2 83.3,65.2 83.7,65.2 84.1,65.2 84.5,65.2 84.9,65.2 85.3,65.2 85.7,65.2 86.0,65.2 86.4,65.2 86.8,65.2 87.2,64.3 87.6,65.2 88.0,65.2 88.4,65.2 88.8,65.2 89.1,65.2 89.5,65.2 89.9,65.2 90.3,65.2 90.7,65.2 91.1,65.2 91.5,65.2 91.8,65.2 92.2,65.2 92.6,65.2 93.0,65.2 93.4,65.2 93.8,65.2 94.2,64.3 94.6,64.3 94.9,65.2 95.3,64.3 95.7,65.2 96.1,65.2 96.5,65.2 96.9,65.2 97.3,64.3 97.6,64.3 98.0,65.2 98.4,64.3 98.8,65.2 99.2,65.2 99.6,65.2 100.0,64.3 100.4,65.2 100.7,65.2 101.1,65.2 101.5,65.2 101.9,65.2 102.3,65.2 102.7,65.2 103.1,65.2 103.4,65.2 103.8,65.2 104.2,64.3 104.6,65.2 105.0,65.2 105.4,65.2 105.8,65.2 106.2,65.2 106.5,65.2 106.9,65.2 107.3,65.2 107.7,65.2 108.1,65.2 108.5,65.2 108.9,65.2 109.3,64.3 109.6,65.2 110.0,65.2 110.4,64.3 110.8,65.2 111.2,65.2 111.6,65.2 112.0,65.2 112.3,65.2 112.7,65.2 113.1,65.2 113.5,65.2 113.9,65.2 114.3,65.2 114.7,65.2 115.1,65.2 115.4,65.2 115.8,65.2 116.2,65.2 116.6,65.2 117.0,65.2 117.4,65.2 117.8,65.2 118.1,65.2 118.5,65.2 118.9,65.2 119.3,65.2 119.7,65.2 120.1,65.2 120.5,64.3 120.9,65.2 121.2,65.2 121.6,65.2 122.0,65.2 122.4,64.3 122.8,65.2 123.2,64.3 123.6,65.2 123.9,65.2 124.3,65.2 124.7,65.2 125.1,65.2 125.5,65.2 125.9,65.2 126.3,65.2 126.7,65.2 127.0,65.2 127.4,65.2 127.8,65.2 128.2,65.2 128.6,64.3 129.0,65.2 129.4,65.2 129.7,65.2 130.1,65.2 130.5,65.2 130.9,65.2 131.3,65.2 131.7,65.2 132.1,65.2 132.5,65.2 132.8,65.2 133.2,65.2 133.6,65.2 134.0,65.2 134.4,65.2 134.8,65.2 135.2,65.2 135.5,65.2 135.9,65.2 136.3,65.2 136.7,65.2 137.1,64.3 137.5,65.2 137.9,65.2 138.3,65.2 138.6,65.2 139.0,65.2 139.4,65.2 139.8,65.2 140.2,64.3 140.6,65.2 141.0,65.2 141.3,65.2 141.7,65.2 142.1,65.2 142.5,65.2 142.9,64.3 143.3,65.2 143.7,65.2 144.1,65.2 144.4,65.2 144.8,65.2 145.2,65.2 145.6,65.2 146.0,65.2 146.4,64.3 146.8,65.2 147.1,64.3 147.5,65.2 147.9,65.2 148.3,65.2 148.7,65.2 149.1,65.2 149.5,65.2 149.9,64.3 150.2,65.2 150.6,64.3 151.0,65.2 151.4,65.2 151.8,65.2 152.2,65.2 152.6,65.2 152.9,65.2 153.3,65.2 153.7,65.2 154.1,65.2 154.5,65.2 154.9,65.2 155.3,65.2 155.7,65.2 156.0,65.2 156.4,65.2 156.8,65.2 157.2,65.2 157.6,65.2 158.0,65.2 158.4,65.2 158.7,65.2 159.1,65.2 159.5,65.2 159.9,65.2 160.3,65.2 160.7,65.2 161.1,64.3 161.5,65.2 161.8,65.2 162.2,65.2 162.6,64.3 163.0,65.2 163.4,65.2 163.8,65.2 164.2,64.3 164.5,65.2 164.9,65.2 165.3,64.3 165.7,65.2 166.1,65.2 166.5,65.2 166.9,65.2 167.3,64.3 167.6,65.2 168.0,65.2 168.4,65.2 168.8,65.2 169.2,65.2 169.6,64.3 170.0,64.3 170.3,64.3 170.7,65.2 171.1,65.2 171.5,65.2 171.9,65.2 172.3,65.2 172.7,65.2 173.1,65.2 173.4,65.2 173.8,65.2 174.2,64.3 174.6,64.3 175.0,65.2 175.4,65.2 175.8,65.2 176.1,65.2 176.5,65.2 176.9,65.2 177.3,65.2 177.7,65.2 178.1,64.3 178.5,65.2 178.9,65.2 179.2,65.2 179.6,65.2 180.0,65.2 180.4,65.2 180.8,65.2 181.2,65.2 181.6,65.2 182.0,64.3 182.3,65.2 182.7,65.2 183.1,65.2 183.5,65.2 183.9,65.2 184.3,65.2 184.7,65.2 185.0,65.2 185.4,65.2 185.8,65.2 186.2,65.2 186.6,65.2 187.0,65.2 187.4,65.2 187.8,65.2 188.1,65.2 188.5,65.2 188.9,65.2 189.3,65.2 189.7,65.2 190.1,65.2 190.5,65.2 190.8,65.2 191.2,64.3 191.6,65.2 192.0,65.2 192.4,64.3 192.8,65.2 193.2,65.2 193.6,65.2 193.9,65.2 194.3,65.2 194.7,65.2 195.1,65.2 195.5,65.2 195.9,65.2 196.3,65.2 196.6,65.2 197.0,65.2 197.4,65.2 197.8,65.2 198.2,65.2 198.6,65.2 199.0,64.3 199.4,65.2 199.7,65.2 200.1,65.2 200.5,65.1 200.9,64.2 201.3,65.1 201.7,65.1 202.1,64.2 202.4,65.1 202.8,65.1 203.2,65.1 203.6,65.1 204.0,65.1 204.4,65.1 204.8,65.1 205.2,65.1 205.5,65.1 205.9,64.2 206.3,65.1 206.7,65.1 207.1,64.2 207.5,65.1 207.9,65.1 208.2,65.1 208.6,65.1 209.0,65.1 209.4,65.1 209.8,64.2 210.2,65.1 210.6,65.1 211.0,65.1 211.3,65.0 211.7,65.0 212.1,65.0 212.5,65.0 212.9,65.0 213.3,65.0 213.7,65.0 214.0,64.9 214.4,64.0 214.8,64.9 215.2,64.0 215.6,64.8 216.0,64.8 216.4,64.7 216.8,64.7 217.1,64.6 217.5,63.5 217.9,64.3 218.3,64.0 218.7,63.6 219.1,63.0 219.5,62.2 219.8,61.1 220.2,60.2 220.6,59.9 221.0,60.4 221.4,61.4 221.8,62.3 222.2,63.1 222.6,63.6 222.9,63.9 223.3,63.1 223.7,64.1 224.1,64.1 224.5,64.1 224.9,64.1 225.3,64.1 225.6,64.1 226.0,64.1 226.4,64.1 226.8,64.1 227.2,64.1 227.6,64.1 228.0,64.1 228.4,63.1 228.7,64.0 229.1,63.9 229.5,63.8 229.9,63.7 230.3,63.4 230.7,63.2 231.1,62.8 231.4,62.2 231.8,61.4 232.2,60.1 232.6,57.9 233.0,53.8 233.4,45.4 233.8,29.1 234.2,7.9 234.5,6.4 234.9,20.5 235.3,36.0 235.7,49.2 236.1,57.0 236.5,60.6 236.9,62.2 237.2,63.0 237.6,63.5 238.0,63.8 238.4,64.1 238.8,63.4 239.2,64.4 239.6,63.6 240.0,64.6 240.3,64.7 240.7,64.7 241.1,64.8 241.5,64.8 241.9,64.9 242.3,64.9 242.7,64.9 243.0,65.0 243.4,65.0 243.8,65.0 244.2,65.0 244.6,64.1 245.0,65.0 245.4,65.0 245.8,65.1 246.1,65.1 246.5,65.1 246.9,65.1 247.3,65.1 247.7,65.1 248.1,65.1 248.5,65.1 248.8,65.1 249.2,65.1 249.6,65.1 250.0,65.1 250.4,65.1 250.8,64.2 251.2,64.2 251.6,65.1 251.9,65.1 252.3,65.1 252.7,64.2 253.1,65.1 253.5,64.2 253.9,64.2 254.3,65.1 254.6,65.1 255.0,65.2 255.4,65.2 255.8,65.2 256.2,65.2 256.6,65.2 257.0,65.2 257.4,65.2 257.7,64.3 258.1,64.3 258.5,65.2 258.9,65.2 259.3,65.2 259.7,65.2 260.1,65.2 260.5,65.2 260.8,65.2 261.2,65.2 261.6,65.2 262.0,65.2 262.4,65.2 262.8,65.2 263.2,65.2 263.5,65.2 263.9,65.2 264.3,65.2 264.7,64.3 265.1,65.2 265.5,64.3 265.9,64.3 266.3,65.2 266.6,65.2 267.0,65.2 267.4,65.2 267.8,65.2 268.2,64.3 268.6,65.2 269.0,65.2 269.3,64.3 269.7,65.2 270.1,65.2 270.5,65.2 270.9,65.2 271.3,65.2 271.7,65.2 272.1,65.2 272.4,65.2 272.8,64.3 273.2,65.2 273.6,65.2 274.0,65.2 274.4,65.2 274.8,65.2 275.1,65.2 275.5,65.2 275.9,65.2 276.3,65.2 276.7,65.2 277.1,65.2 277.5,65.2 277.9,65.2 278.2,65.2 278.6,65.2 279.0,65.2 279.4,65.2 279.8,65.2 280.2,65.2 280.6,65.2 280.9,65.2 281.3,65.2 281.7,65.2 282.1,65.2 282.5,65.2 282.9,65.2 283.3,65.2 283.7,65.2 284.0,64.3 284.4,65.2 284.8,65.2 285.2,65.2 285.6,65.2 286.0,65.2 286.4,65.2 286.7,64.3 287.1,65.2 287.5,65.2 287.9,64.3 288.3,64.3 288.7,65.2 289.1,65.2 289.5,64.3 289.8,65.2 290.2,65.2 290.6,65.2 291.0,65.2 291.4,65.2 291.8,65.2 292.2,65.2 292.5,65.2 292.9,65.2 293.3,65.2 293.7,65.2 294.1,65.2 294.5,65.2 294.9,65.2 295.3,65.2 295.6,65.2 296.0,65.2 296.4,65.2 296.8,65.2 297.2,65.2 297.6,65.2 298.0,65.2 298.3,65.2 298.7,65.2 299.1,65.2 299.5,65.2 299.9,65.2 300.3,65.2 300.7,65.2 301.1,65.2 301.4,65.2 301.8,65.2 302.2,65.2 302.6,65.2 303.0,65.2 303.4,65.2 303.8,65.2 304.1,65.2 304.5,65.2 304.9,65.2 305.3,65.2 305.7,64.3 306.1,65.2 306.5,64.3 306.9,65.2 307.2,65.2 307.6,65.2 308.0,64.3 308.4,65.2 308.8,65.2 309.2,65.2 309.6,64.3 309.9,64.3 310.3,65.2 310.7,65.2 311.1,65.2 311.5,65.2 311.9,65.2 312.3,65.2 312.7,65.2 313.0,65.2 313.4,65.2 313.8,65.2 314.2,65.2 314.6,65.2 315.0,65.2 315.4,65.2 315.7,65.2 316.1,65.2 316.5,65.2 316.9,65.2 317.3,65.2 317.7,65.2 318.1,65.2 318.5,65.2 318.8,64.3 319.2,65.2 319.6,65.2 320.0,65.2 320.4,65.2 320.8,65.2 321.2,65.2 321.5,65.2 321.9,65.2 322.3,65.2 322.7,64.3 323.1,65.2 323.5,65.2 323.9,65.2 324.3,65.2 324.6,65.2 325.0,65.2 325.4,65.2 325.8,65.2 326.2,65.2 326.6,65.2 327.0,65.2 327.3,65.2 327.7,65.2 328.1,65.2 328.5,65.2 328.9,65.2 329.3,65.2 329.7,64.3 330.1,65.2 330.4,65.2 330.8,65.2 331.2,64.3 331.6,65.2 332.0,65.2 332.4,64.3 332.8,65.2 333.1,65.2 333.5,65.2 333.9,65.2 334.3,65.2 334.7,65.2 335.1,65.2 335.5,65.2 335.9,65.2 336.2,64.3 336.6,65.2 337.0,65.2 337.4,65.2 337.8,65.2 338.2,65.2 338.6,65.2 339.0,65.2 339.3,65.2 339.7,64.3 340.1,65.2 340.5,65.2 340.9,65.2 341.3,65.2 341.7,65.2 342.0,64.3 342.4,65.2 342.8,65.2 343.2,65.2 343.6,65.2 344.0,65.2 344.4,64.3 344.8,65.2 345.1,65.2 345.5,65.2 345.9,65.2 346.3,65.2 346.7,64.3 347.1,65.2 347.5,65.2 347.8,65.2 348.2,65.2 348.6,65.2 349.0,65.2 349.4,65.2 349.8,65.2 350.2,65.2 350.6,65.2 350.9,65.2 351.3,65.2 351.7,65.2 352.1,65.2 352.5,65.2 352.9,65.2 353.3,65.2 353.6,65.2 354.0,65.2 354.4,65.2 354.8,64.3 355.2,65.2 355.6,64.3 356.0,65.2 356.4,65.2 356.7,65.2 357.1,65.2 357.5,65.2 357.9,65.2 358.3,64.3 358.7,65.2 359.1,65.2 359.4,64.3 359.8,65.2 360.2,64.3 360.6,65.2 361.0,65.2 361.4,65.2 361.8,65.2 362.2,65.2 362.5,65.2 362.9,65.2 363.3,65.2 363.7,65.1 364.1,64.2 364.5,65.1 364.9,65.1 365.2,65.1 365.6,65.1 366.0,65.1 366.4,65.1 366.8,64.2 367.2,65.1 367.6,65.1 368.0,65.1 368.3,64.2 368.7,65.0 369.1,65.0 369.5,65.0 369.9,64.9 370.3,64.9 370.7,64.8 371.0,64.8 371.4,64.7 371.8,64.5 372.2,64.3 372.6,63.9 373.0,63.3 373.4,62.1 373.8,60.0 374.1,57.1 374.5,55.9 374.9,57.3 375.3,59.2 375.7,60.6 376.1,62.0 376.5,63.2 376.8,64.1 377.2,64.5 377.6,64.7 378.0,64.8 378.4,64.9 378.8,65.0 379.2,65.0 379.6,65.0 379.9,65.1 380.3,65.1 380.7,64.2 381.1,65.1 381.5,65.1 381.9,65.1 382.3,65.1 382.6,65.1 383.0,65.1 383.4,65.1 383.8,64.3 384.2,65.2 384.6,64.3 385.0,65.2 385.4,65.2 385.7,65.2 386.1,65.2 386.5,65.2 386.9,65.2 387.3,65.2 387.7,65.2 388.1,65.2 388.4,64.3 388.8,65.2 389.2,65.2 389.6,65.2 390.0,65.2 390.4,65.2 390.8,65.2 391.2,65.2 391.5,65.2 391.9,64.3 392.3,64.3 392.7,65.2 393.1,65.2 393.5,65.2 393.9,65.2 394.2,65.2 394.6,65.2 395.0,65.2 395.4,65.2 395.8,65.2 396.2,65.2 396.6,64.3 397.0,65.2 397.3,65.2 397.7,65.2 398.1,65.2 398.5,65.2 398.9,65.2 399.3,65.2 399.7,65.2 400.0,65.2 400.4,65.2 400.8,65.2 401.2,64.3 401.6,65.2 402.0,65.2 402.4,65.2 402.8,65.2 403.1,65.2 403.5,65.2 403.9,65.2 404.3,65.2 404.7,65.2 405.1,65.2 405.5,65.2 405.8,65.2 406.2,65.2 406.6,65.2 407.0,65.2 407.4,65.2 407.8,65.2 408.2,65.2 408.6,65.2 408.9,65.2 409.3,65.2 409.7,65.2 410.1,65.2 410.5,64.3 410.9,65.2 411.3,65.2 411.6,65.2 412.0,65.2 412.4,65.2 412.8,65.2 413.2,65.2 413.6,64.3 414.0,64.3 414.4,65.2 414.7,65.2 415.1,65.2 415.5,64.3 415.9,65.2 416.3,65.2 416.7,65.2 417.1,65.2 417.5,65.2 417.8,65.2 418.2,64.3 418.6,65.2 419.0,65.2 419.4,65.2 419.8,65.2 420.2,65.2 420.5,65.2 420.9,65.2 421.3,65.2 421.7,65.2 422.1,65.2 422.5,64.3 422.9,65.2 423.3,64.3 423.6,65.2 424.0,65.2 424.4,64.3 424.8,65.2 425.2,65.2 425.6,65.2 426.0,64.3 426.3,65.2 426.7,65.2 427.1,65.2 427.5,65.2 427.9,65.2 428.3,64.3 428.7,64.3 429.1,65.2 429.4,65.2 429.8,65.2 430.2,65.2 430.6,65.2 431.0,65.2 431.4,65.2 431.8,65.2 432.1,65.2 432.5,65.2 432.9,65.2 433.3,65.2 433.7,65.2 434.1,65.2 434.5,65.2 434.9,65.2 435.2,65.2 435.6,65.2 436.0,65.2 436.4,65.2 436.8,65.2 437.2,64.3 437.6,64.3 437.9,65.2 438.3,65.2 438.7,65.2 439.1,65.2 439.5,65.2 439.9,64.3 440.3,65.2 440.7,65.2 441.0,65.2 441.4,64.3 441.8,65.2 442.2,65.2 442.6,65.2 443.0,65.2 443.4,65.2 443.7,65.2 444.1,65.2 444.5,65.2 444.9,65.2 445.3,65.2 445.7,65.2 446.1,65.2 446.5,65.2 446.8,65.2 447.2,65.2 447.6,65.2 448.0,65.2 448.4,65.2 448.8,64.3 449.2,65.2 449.5,65.2 449.9,65.2 450.3,65.2 450.7,64.3 451.1,65.2 451.5,65.2 451.9,65.2 452.3,65.2 452.6,64.3 453.0,65.2 453.4,65.2 453.8,65.2 454.2,65.2 454.6,65.2 455.0,65.2 455.3,65.2 455.7,65.2 456.1,64.3 456.5,65.2 456.9,65.2 457.3,65.2 457.7,65.2 458.1,65.2 458.4,65.2 458.8,65.2 459.2,65.2 459.6,65.2 460.0,65.2 460.4,65.2 460.8,65.2 461.1,65.2 461.5,65.2 461.9,65.2 462.3,65.2 462.7,65.2 463.1,65.2 463.5,65.2 463.9,65.2 464.2,65.2 464.6,65.2 465.0,65.2 465.4,65.2 465.8,65.2 466.2,65.2 466.6,65.2 466.9,65.2 467.3,65.2 467.7,65.2 468.1,65.2 468.5,64.3 468.9,65.2 469.3,65.2 469.7,65.2 470.0,65.2 470.4,65.2 470.8,65.2 471.2,64.3 471.6,65.2 472.0,65.2 472.4,65.2 472.7,65.2 473.1,65.2 473.5,64.3 473.9,65.2 474.3,65.2 474.7,65.2 475.1,65.2 475.5,65.2 475.8,65.2 476.2,65.2 476.6,64.2 477.0,65.1 477.4,65.1 477.8,65.1 478.2,65.1 478.5,65.1 478.9,64.2 479.3,65.1 479.7,65.1 480.1,65.1 480.5,65.1 480.9,65.1 481.3,65.1 481.6,65.1 482.0,64.2 482.4,65.1 482.8,65.0 483.2,65.0 483.6,65.0 484.0,64.1 484.3,65.0 484.7,64.9 485.1,64.9 485.5,64.9 485.9,64.8 486.3,64.7 486.7,63.8 487.1,64.5 487.4,64.4 487.8,64.2 488.2,63.9 488.6,63.4 489.0,62.6 489.4,61.1 489.8,58.7 490.1,55.2 490.5,52.3 490.9,53.3 491.3,56.1 491.7,58.2 492.1,59.3 492.5,60.3 492.9,61.8 493.2,63.0 493.6,63.9 494.0,64.4 494.4,64.6 494.8,64.7 495.2,63.9 495.6,64.0 496.0,64.9 496.3,65.0 496.7,65.0 497.1,65.0 497.5,65.1 497.9,65.1 498.3,65.1 498.7,65.1 499.0,65.1 499.4,65.1 499.8,65.1 500.2,65.1 500.6,65.1 501.0,64.2 501.4,65.1 501.8,65.1 502.1,64.2 502.5,65.2 502.9,65.2 503.3,65.2 503.7,65.2 504.1,65.2 504.5,65.2 504.8,65.2 505.2,65.2 505.6,65.2 506.0,65.2 506.4,65.2 506.8,65.2 507.2,65.2 507.6,65.2 507.9,65.2 508.3,65.2 508.7,65.2 509.1,65.2 509.5,65.2 509.9,65.2 510.3,65.2 510.6,65.2 511.0,65.2 511.4,65.2 511.8,65.2 512.2,64.3 512.6,65.2 513.0,65.2 513.4,65.2 513.7,64.3 514.1,65.2 514.5,65.2 514.9,65.2 515.3,65.2 515.7,65.2 516.1,65.2 516.4,65.2 516.8,65.2 517.2,65.2 517.6,65.2 518.0,65.2 518.4,65.2 518.8,65.2 519.2,64.3 519.5,65.2 519.9,65.2 520.3,64.3 520.7,65.2 521.1,65.2 521.5,65.2 521.9,65.2 522.2,64.3 522.6,65.2 523.0,65.2 523.4,64.3 523.8,65.2 524.2,65.2 524.6,64.3 525.0,65.2 525.3,65.2 525.7,65.2 526.1,64.3 526.5,65.2 526.9,65.2 527.3,65.2 527.7,65.2 528.0,65.2 528.4,65.2 528.8,65.2 529.2,65.2 529.6,65.2 530.0,65.2 530.4,65.2 530.8,65.2 531.1,65.2 531.5,65.2 531.9,65.2 532.3,64.3 532.7,64.3 533.1,65.2 533.5,65.2 533.8,65.2 534.2,65.2 534.6,65.2 535.0,65.2 535.4,65.2 535.8,65.2 536.2,65.2 536.6,65.2 536.9,65.2 537.3,65.2 537.7,65.2 538.1,65.2 538.5,64.3 538.9,65.2 539.3,65.2 539.6,64.3 540.0,65.2 540.4,65.2 540.8,65.2 541.2,65.2 541.6,65.2 542.0,65.2 542.4,65.2 542.7,65.2 543.1,65.2 543.5,65.2 543.9,64.3 544.3,65.2 544.7,65.2 545.1,65.2 545.4,65.2 545.8,65.2 546.2,65.2 546.6,65.2 547.0,64.3 547.4,65.2 547.8,65.2 548.2,64.3 548.5,65.2 548.9,64.3 549.3,65.2 549.7,65.2 550.1,65.2 550.5,65.2 550.9,65.2 551.2,64.3 551.6,65.2 552.0,65.2 552.4,65.2 552.8,65.2 553.2,65.2 553.6,65.2 554.0,65.2 554.3,65.2 554.7,65.2 555.1,65.2 555.5,65.2 555.9,65.2 556.3,65.2 556.7,65.2 557.0,65.2 557.4,65.2 557.8,65.2 558.2,65.2 558.6,65.2 559.0,65.2 559.4,65.2 559.8,65.2 560.1,64.3 560.5,64.3 560.9,65.2 561.3,65.2 561.7,65.2 562.1,65.2 562.5,65.2 562.8,65.2 563.2,65.2 563.6,65.2 564.0,65.2 564.4,64.3 564.8,65.2 565.2,65.2 565.6,65.2 565.9,65.2 566.3,65.2 566.7,65.2 567.1,65.2 567.5,65.2 567.9,65.2 568.3,65.2 568.7,65.2 569.0,65.2 569.4,65.2 569.8,65.2 570.2,65.2 570.6,65.2 571.0,65.2 571.4,65.2 571.7,65.2 572.1,65.2 572.5,65.2 572.9,65.2 573.3,65.2 573.7,65.2 574.1,65.2 574.5,65.2 574.8,65.2 575.2,65.2 575.6,65.2 576.0,65.2 576.4,65.2 576.8,65.2 577.2,64.3 577.5,64.3 577.9,64.3 578.3,64.3 578.7,65.2 579.1,64.3 579.5,65.2 579.9,65.2 580.3,65.2 580.6,65.2 581.0,65.2 581.4,65.2 581.8,64.3 582.2,65.2 582.6,65.2 583.0,65.2 583.3,65.2 583.7,65.2 584.1,65.2 584.5,65.2 584.9,65.2 585.3,65.2 585.7,65.2 586.1,65.2 586.4,65.2 586.8,65.2 587.2,65.2 587.6,65.2 588.0,65.2 588.4,65.2 588.8,65.2 589.1,64.3 589.5,65.2 589.9,65.1 590.3,65.1 590.7,65.1 591.1,64.2 591.5,65.1 591.9,65.1 592.2,65.1 592.6,64.2 593.0,65.1 593.4,65.0 593.8,65.0 594.2,65.0 594.6,64.9 594.9,64.9 595.3,63.8 595.7,64.6 596.1,63.4 596.5,63.8 596.9,63.1 597.3,62.1 597.7,61.6 598.0,62.1 598.4,62.8 598.8,63.4 599.2,63.7 599.6,63.8 600.0,63.0 600.4,64.3 600.7,64.6 601.1,64.8 601.5,64.0 601.9,65.0 602.3,64.2 602.7,65.1 603.1,65.1 603.5,65.1 603.8,65.1 604.2,65.1 604.6,65.1 605.0,65.2 605.4,65.2 605.8,65.2 606.2,65.2 606.5,65.2 606.9,65.2 607.3,65.2 607.7,65.2 608.1,65.2 608.5,65.2 608.9,65.2 609.3,64.3 609.6,65.2 610.0,65.2 610.4,65.2 610.8,64.3 611.2,65.2 611.6,64.3 612.0,65.2 612.3,65.2 612.7,65.2 613.1,65.2 613.5,65.2 613.9,65.2 614.3,65.2 614.7,65.2 615.1,64.3 615.4,64.3 615.8,65.2 616.2,65.2 616.6,64.3" fill="none" stroke="#fff" stroke-width="1"/></svg>
<svg class="a" style="left:158px;top:162px" width="616" height="390.5" viewBox="0 0 616 390.5"><path d="M220.0 239.0 V368.0" stroke="#009cb0" stroke-width="1.2" stroke-dasharray="2.2 2.2"/><path d="M374.3 28.0 V330.0" stroke="#009cb0" stroke-width="1.2" stroke-dasharray="2.2 2.2"/><path d="M490.5 0.0 V273.0" stroke="#009cb0" stroke-width="1.2" stroke-dasharray="2.2 2.2"/><path d="M597.6 311.0 V389.0" stroke="#00dcec" stroke-width="1.2" stroke-dasharray="2.2 2.2"/><rect x="231.8" y="38.0" width="4.6" height="281.5" fill="#8e8e8e"/><path d="M232.0 38.0 V319.5 M236.2 38.0 V319.5" stroke="#f4f4f4" stroke-width="0.9"/><path d="M234.6 19.0 V390.6" stroke="#7c7c7c" stroke-width="1.2"/><path d="M490.9 273.0 V390.6" stroke="#8a8a8a" stroke-width="1.2"/><path d="M374.7 328.5 V390.6" stroke="#8a8a8a" stroke-width="1.2"/><path d="M596.8 356.0 V390.6" stroke="#a0a0a0" stroke-width="1.2"/><polyline points="0.6,388.1 1.3,387.9 2.0,388.1 2.7,388.3 3.4,388.0 4.1,388.7 4.8,389.0 5.5,387.9 6.2,388.4 6.9,388.2 7.5,388.9 8.2,388.5 8.9,388.6 9.6,388.6 10.3,387.6 11.0,388.6 11.7,387.9 12.4,388.3 13.1,388.0 13.8,388.9 14.5,388.3 15.2,388.2 15.9,388.2 16.6,388.1 17.3,388.0 18.0,388.2 18.7,388.3 19.4,388.7 20.1,388.4 20.8,388.3 21.5,388.1 22.2,387.3 22.9,387.8 23.6,388.3 24.3,388.1 24.9,389.0 25.6,388.4 26.3,388.7 27.0,388.1 27.7,389.1 28.4,388.2 29.1,389.5 29.8,387.5 30.5,387.7 31.2,388.9 31.9,388.0 32.6,388.3 33.3,387.4 34.0,387.8 34.7,388.2 35.4,388.3 36.1,387.9 36.8,388.7 37.5,387.9 38.2,388.2 38.9,388.7 39.6,388.6 40.3,388.6 41.0,388.5 41.7,387.4 42.4,388.4 43.0,388.2 43.7,388.7 44.4,387.7 45.1,388.2 45.8,387.7 46.5,388.9 47.2,388.5 47.9,388.2 48.6,388.1 49.3,388.1 50.0,388.0 50.7,388.4 51.4,388.3 52.1,388.7 52.8,388.3 53.5,388.5 54.2,387.9 54.9,388.1 55.6,388.4 56.3,388.1 57.0,388.6 57.7,388.3 58.4,388.5 59.1,387.9 59.8,388.4 60.4,388.0 61.1,388.4 61.8,388.9 62.5,388.0 63.2,388.2 63.9,388.0 64.6,388.8 65.3,389.2 66.0,388.4 66.7,388.1 67.4,389.1 68.1,387.4 68.8,388.0 69.5,387.9 70.2,388.7 70.9,387.9 71.6,388.2 72.3,387.8 73.0,387.7 73.7,388.8 74.4,388.7 75.1,388.7 75.8,388.5 76.5,388.4 77.2,388.0 77.9,388.9 78.5,388.9 79.2,388.1 79.9,388.7 80.6,388.1 81.3,388.2 82.0,387.8 82.7,388.8 83.4,388.5 84.1,387.8 84.8,388.2 85.5,388.8 86.2,388.1 86.9,389.1 87.6,388.8 88.3,388.0 89.0,387.9 89.7,387.6 90.4,388.3 91.1,388.6 91.8,387.7 92.5,387.9 93.2,388.3 93.9,388.2 94.6,388.5 95.3,387.8 95.9,388.3 96.6,388.2 97.3,387.5 98.0,388.9 98.7,389.1 99.4,388.0 100.1,389.0 100.8,389.6 101.5,388.4 102.2,387.5 102.9,388.0 103.6,388.4 104.3,388.6 105.0,388.1 105.7,388.7 106.4,389.1 107.1,388.5 107.8,388.2 108.5,388.0 109.2,388.4 109.9,388.4 110.6,389.0 111.3,388.6 112.0,388.6 112.7,388.3 113.3,388.1 114.0,389.1 114.7,388.2 115.4,388.8 116.1,387.7 116.8,388.7 117.5,388.1 118.2,388.0 118.9,388.2 119.6,388.2 120.3,388.8 121.0,387.6 121.7,388.2 122.4,388.5 123.1,388.1 123.8,387.9 124.5,388.0 125.2,388.8 125.9,388.2 126.6,388.4 127.3,388.0 128.0,388.3 128.7,388.9 129.4,388.9 130.1,388.3 130.8,388.6 131.4,388.5 132.1,388.7 132.8,387.9 133.5,388.3 134.2,388.5 134.9,387.8 135.6,388.4 136.3,387.7 137.0,388.4 137.7,388.5 138.4,387.8 139.1,387.8 139.8,388.5 140.5,388.2 141.2,387.5 141.9,387.6 142.6,388.6 143.3,388.5 144.0,387.8 144.7,387.0 145.4,388.5 146.1,388.9 146.8,388.5 147.5,388.0 148.2,388.5 148.8,388.1 149.5,388.6 150.2,388.6 150.9,388.1 151.6,388.7 152.3,388.7 153.0,388.1 153.7,387.9 154.4,388.4 155.1,388.3 155.8,388.6 156.5,388.6 157.2,388.4 157.9,388.0 158.6,388.5 159.3,387.9 160.0,388.7 160.7,389.2 161.4,388.0 162.1,388.8 162.8,387.8 163.5,388.6 164.2,388.5 164.9,387.8 165.6,388.1 166.3,388.3 166.9,387.8 167.6,387.9 168.3,388.3 169.0,388.4 169.7,388.8 170.4,388.2 171.1,387.8 171.8,387.6 172.5,387.5 173.2,388.2 173.9,387.8 174.6,388.6 175.3,387.5 176.0,387.9 176.7,388.6 177.4,388.4 178.1,388.2 178.8,388.0 179.5,388.3 180.2,388.4 180.9,387.9 181.6,388.3 182.3,388.8 183.0,388.7 183.7,387.4 184.3,388.0 185.0,388.2 185.7,388.4 186.4,388.5 187.1,388.4 187.8,387.7 188.5,388.3 189.2,387.5 189.9,389.0 190.6,388.8 191.3,386.7 192.0,388.2 192.7,388.7 193.4,387.5 194.1,388.4 194.8,388.5 195.5,387.8 196.2,387.9 196.9,388.3 197.6,387.7 198.3,387.9 199.0,387.9 199.7,387.2 200.4,387.3 201.1,387.1 201.7,386.1 202.4,386.6 203.1,385.0 203.8,385.6 204.5,386.3 205.2,387.4 205.9,387.8 206.6,387.4 207.3,387.8 208.0,387.2 208.7,388.2 209.4,387.4 210.1,387.6 210.8,387.4 211.5,387.2 211.6,386.5 211.8,388.2 212.0,387.1 212.1,387.3 212.3,387.5 212.4,386.6 212.6,387.4 212.7,387.2 212.9,387.0 213.0,387.5 213.2,387.3 213.4,387.0 213.5,387.2 213.7,387.1 213.8,386.4 214.0,386.6 214.1,387.1 214.3,385.9 214.4,386.8 214.6,386.2 214.7,386.3 214.9,386.5 215.1,387.3 215.2,386.3 215.4,387.5 215.5,386.2 215.7,385.5 215.8,385.7 216.0,385.4 216.1,384.9 216.3,386.7 216.4,386.1 216.6,386.8 216.8,386.6 216.9,385.1 217.1,385.7 217.2,385.0 217.4,385.2 217.5,384.6 217.7,385.8 217.8,384.7 218.0,384.7 218.1,384.2 218.3,383.6 218.5,382.7 218.6,382.2 218.8,380.8 218.9,381.4 219.1,380.0 219.2,379.2 219.4,378.0 219.5,375.9 219.7,374.5 219.8,372.2 220.0,370.1 220.2,369.7 220.3,369.6 220.5,367.6 220.6,366.0 220.8,369.9 220.9,370.4 221.1,371.2 221.2,371.4 221.4,374.3 221.5,375.8 221.7,375.3 221.9,378.2 222.0,378.5 222.2,381.3 222.3,380.8 222.5,382.4 222.6,381.8 222.8,383.0 222.9,383.0 223.1,383.2 223.2,383.7 223.4,384.4 223.6,383.8 223.7,384.0 223.9,383.3 224.0,383.0 224.2,383.1 224.3,383.8 224.5,382.6 224.6,383.2 224.8,382.0 225.0,383.2 225.1,383.0 225.3,384.5 225.4,381.6 225.6,381.6 225.7,382.4 225.9,381.5 226.0,382.2 226.2,382.5 226.3,382.1 226.5,381.8 226.7,380.1 226.8,381.5 227.0,381.0 227.1,381.4 227.3,380.0 227.4,379.7 227.6,379.6 227.7,378.3 227.9,378.1 228.0,378.3 228.2,375.9 228.4,378.8 228.5,375.7 228.7,376.5 228.8,374.8 229.0,374.7 229.1,374.2 229.3,371.2 229.4,372.2 229.6,371.5 229.7,369.2 229.9,368.1 230.1,369.0 230.2,366.3 230.4,364.7 230.5,362.7 230.7,361.0 230.8,359.3 231.0,356.8 231.1,351.9 231.3,350.5 231.4,345.5 231.6,341.8 231.8,336.8 231.9,331.2 232.1,323.3 232.2,315.3 232.4,305.6 232.5,293.0 232.7,278.2 232.8,261.8 233.0,241.1 233.1,217.8 233.3,191.4 233.5,160.4 233.6,127.7 233.8,93.1 233.9,60.6 234.1,32.4 234.2,13.3 234.4,2.1 234.5,4.3 234.7,16.1 234.9,35.6 235.0,61.4 235.2,90.3 235.3,121.6 235.5,153.4 235.6,184.7 235.8,213.9 235.9,241.0 236.1,264.3 236.2,284.8 236.4,302.1 236.6,315.8 236.7,327.6 236.9,337.2 237.0,344.4 237.2,351.5 237.3,354.6 237.5,359.2 237.6,363.6 237.8,364.2 237.9,366.3 238.1,369.6 238.3,371.1 238.4,372.9 238.6,373.2 238.7,374.7 238.9,375.3 239.0,376.7 239.2,377.4 239.3,377.9 239.5,378.5 239.6,378.3 239.8,380.0 240.0,378.8 240.1,381.1 240.3,380.8 240.4,382.5 240.6,382.1 240.7,382.4 240.9,381.2 241.0,384.5 241.2,382.3 241.3,383.4 241.5,382.1 241.7,383.2 241.8,382.9 242.0,383.8 242.1,384.8 242.3,384.1 242.4,384.0 242.6,384.1 242.7,385.1 242.9,384.8 243.0,385.5 243.2,385.5 243.4,385.6 243.5,383.7 243.7,385.4 244.4,386.3 245.1,385.8 245.8,386.2 246.5,385.6 247.1,386.3 247.8,386.6 248.5,386.9 249.2,387.2 249.9,387.4 250.6,387.9 251.3,387.8 252.0,387.6 252.7,386.9 253.4,386.6 254.1,387.6 254.8,388.5 255.5,387.1 256.2,387.3 256.9,387.7 257.6,387.5 258.3,388.5 259.0,388.0 259.7,387.4 260.4,387.4 261.1,388.8 261.8,388.4 262.5,387.4 263.2,388.3 263.9,388.7 264.5,387.2 265.2,388.1 265.9,388.4 266.6,387.6 267.3,388.6 268.0,388.1 268.7,387.8 269.4,387.6 270.1,388.0 270.8,388.1 271.5,387.8 272.2,388.1 272.9,387.9 273.6,388.5 274.3,388.1 275.0,388.2 275.7,387.8 276.4,389.0 277.1,388.2 277.8,387.7 278.5,387.5 279.2,387.8 279.9,388.7 280.6,388.9 281.3,388.4 282.0,388.8 282.6,388.3 283.3,387.6 284.0,388.6 284.7,388.2 285.4,388.1 286.1,387.9 286.8,388.4 287.5,388.2 288.2,388.5 288.9,388.6 289.6,388.1 290.3,388.4 291.0,389.2 291.7,388.8 292.4,388.3 293.1,388.4 293.8,388.0 294.5,388.1 295.2,388.3 295.9,387.7 296.6,388.5 297.3,387.4 298.0,387.9 298.7,387.8 299.4,387.9 300.0,387.3 300.7,387.4 301.4,388.6 302.1,387.5 302.8,387.7 303.5,388.0 304.2,388.2 304.9,388.2 305.6,389.3 306.3,388.8 307.0,388.6 307.7,389.0 308.4,388.2 309.1,388.8 309.8,387.8 310.5,388.0 311.2,388.1 311.9,387.8 312.6,388.6 313.3,387.9 314.0,388.1 314.7,387.7 315.4,388.7 316.1,388.0 316.8,387.8 317.4,388.0 318.1,389.3 318.8,388.7 319.5,388.5 320.2,388.3 320.9,388.4 321.6,387.9 322.3,388.6 323.0,389.2 323.7,387.3 324.4,388.4 325.1,387.5 325.8,388.6 326.5,388.2 327.2,388.3 327.9,388.8 328.6,388.2 329.3,388.5 330.0,388.8 330.7,389.0 331.4,388.9 332.1,387.8 332.8,388.0 333.5,388.1 334.2,388.3 334.9,387.6 335.5,387.7 336.2,388.1 336.9,388.2 337.6,387.4 338.3,388.0 339.0,388.4 339.7,388.7 340.4,388.8 341.1,388.5 341.8,388.2 342.5,388.2 343.2,387.4 343.9,387.8 344.6,387.3 345.3,388.2 346.0,388.3 346.7,387.7 347.4,387.9 348.1,387.7 348.8,387.6 349.5,387.8 350.2,387.7 350.9,387.1 351.6,386.7 352.3,385.0 352.9,386.0 353.6,385.5 354.3,385.7 355.0,386.7 355.7,386.7 356.4,387.0 357.1,388.4 357.8,387.6 358.5,388.0 359.2,387.6 359.9,388.1 360.6,388.2 361.3,388.2 362.0,387.9 362.7,387.6 363.4,388.0 364.1,387.7 364.8,387.3 365.5,388.0 365.6,386.9 365.8,388.0 365.9,388.3 366.1,387.7 366.3,387.6 366.4,387.4 366.6,387.8 366.7,387.3 366.9,386.9 367.0,386.9 367.2,387.3 367.3,387.9 367.5,386.4 367.6,386.7 367.8,387.2 368.0,386.5 368.1,386.3 368.3,386.9 368.4,387.4 368.6,386.7 368.7,387.3 368.9,386.9 369.0,385.9 369.2,386.5 369.3,387.0 369.5,386.3 369.7,386.3 369.8,386.6 370.0,385.9 370.1,384.5 370.3,385.0 370.4,385.1 370.6,384.8 370.7,383.7 370.9,385.8 371.0,383.8 371.2,384.3 371.4,383.3 371.5,383.4 371.7,383.1 371.8,384.0 372.0,381.2 372.1,380.1 372.3,380.4 372.4,380.2 372.6,377.3 372.7,377.5 372.9,373.9 373.1,370.0 373.2,366.5 373.4,362.7 373.5,358.4 373.7,353.8 373.8,347.9 374.0,342.0 374.1,336.6 374.3,332.7 374.4,331.1 374.6,330.9 374.8,333.0 374.9,335.7 375.1,339.7 375.2,343.3 375.4,347.6 375.5,351.1 375.7,354.0 375.8,358.0 376.0,361.4 376.2,365.4 376.3,369.0 376.5,374.3 376.6,375.3 376.8,377.0 376.9,379.5 377.1,379.4 377.2,382.1 377.4,381.4 377.5,382.7 377.7,384.3 377.9,385.7 378.0,385.8 378.2,385.8 378.3,385.6 378.5,384.4 378.6,386.6 378.8,385.3 378.9,386.3 379.1,386.7 379.2,386.6 379.4,386.6 379.6,386.6 379.7,387.0 379.9,387.4 380.0,386.7 380.2,387.1 380.3,387.0 380.5,387.8 380.6,387.7 380.8,387.8 380.9,387.4 381.1,387.4 381.3,387.6 381.4,387.4 381.6,387.6 381.7,387.0 381.9,388.0 382.0,387.3 382.2,388.0 382.3,388.0 382.5,388.3 382.6,387.0 382.8,388.2 383.0,388.0 383.1,388.3 383.3,388.0 383.4,388.3 383.6,387.0 383.7,387.8 384.4,386.9 385.1,387.4 385.8,388.7 386.5,387.8 387.2,387.6 387.9,387.8 388.6,388.2 389.3,387.8 390.0,387.6 390.7,388.1 391.4,387.6 392.1,387.6 392.8,387.3 393.5,388.2 394.2,388.0 394.9,388.4 395.6,388.6 396.3,388.7 397.0,388.4 397.7,387.8 398.3,388.5 399.0,388.3 399.7,388.2 400.4,388.6 401.1,388.2 401.8,388.8 402.5,388.5 403.2,388.4 403.9,388.2 404.6,388.7 405.3,388.2 406.0,388.9 406.7,389.1 407.4,388.3 408.1,387.8 408.8,387.6 409.5,387.8 410.2,388.1 410.9,387.4 411.6,388.1 412.3,388.5 413.0,387.8 413.7,388.5 414.4,388.6 415.1,387.9 415.7,387.6 416.4,388.2 417.1,388.3 417.8,387.8 418.5,387.5 419.2,388.2 419.9,387.8 420.6,387.4 421.3,387.5 422.0,387.0 422.7,387.5 423.4,389.1 424.1,387.5 424.8,388.4 425.5,388.0 426.2,388.8 426.9,387.9 427.6,388.9 428.3,387.9 429.0,387.5 429.7,388.3 430.4,387.9 431.1,388.2 431.8,388.3 432.5,388.6 433.2,388.3 433.8,388.1 434.5,388.8 435.2,387.4 435.9,388.8 436.6,388.3 437.3,388.4 438.0,388.3 438.7,388.4 439.4,387.4 440.1,388.3 440.8,388.3 441.5,388.0 442.2,388.5 442.9,388.9 443.6,387.6 444.3,388.3 445.0,387.7 445.7,387.7 446.4,387.4 447.1,387.9 447.8,388.1 448.5,388.9 449.2,387.7 449.9,388.5 450.6,387.5 451.2,388.3 451.9,388.5 452.6,388.0 453.3,388.0 454.0,387.9 454.7,387.5 455.4,387.1 456.1,387.6 456.8,386.9 457.5,387.3 458.2,387.9 458.9,387.2 459.6,386.3 460.3,385.6 461.0,384.2 461.7,384.4 462.4,384.2 463.1,382.8 463.8,384.3 464.5,383.6 465.2,386.3 465.9,386.8 466.6,385.8 467.3,388.3 468.0,388.4 468.6,387.7 469.3,388.2 470.0,387.9 470.7,387.3 471.4,388.0 472.1,387.9 472.8,387.5 473.5,388.3 474.2,388.6 474.9,387.7 475.6,387.8 476.3,387.5 477.0,388.1 477.7,387.9 478.4,387.7 479.1,387.4 479.8,387.1 480.5,387.3 481.2,388.5 481.9,387.3 482.0,387.4 482.2,387.4 482.3,387.3 482.5,386.7 482.6,388.2 482.8,386.6 483.0,386.4 483.1,386.3 483.3,387.0 483.4,387.5 483.6,387.3 483.7,386.7 483.9,385.3 484.0,386.8 484.2,386.2 484.3,385.4 484.5,385.3 484.7,385.9 484.8,385.4 485.0,384.7 485.1,385.2 485.3,385.2 485.4,385.7 485.6,385.2 485.7,385.0 485.9,385.7 486.1,384.9 486.2,383.1 486.4,384.5 486.5,384.4 486.7,384.0 486.8,382.6 487.0,381.7 487.1,381.4 487.3,379.7 487.4,381.3 487.6,379.8 487.8,379.2 487.9,378.6 488.1,375.9 488.2,376.5 488.4,374.4 488.5,373.9 488.7,370.0 488.8,368.1 489.0,365.9 489.1,362.1 489.3,358.1 489.5,352.2 489.6,346.2 489.8,339.8 489.9,332.9 490.1,325.4 490.2,318.9 490.4,313.4 490.5,310.1 490.7,310.4 490.8,311.1 491.0,313.7 491.2,318.0 491.3,323.0 491.5,328.2 491.6,332.7 491.8,336.7 491.9,340.2 492.1,344.0 492.2,347.6 492.4,350.4 492.5,354.0 492.7,359.3 492.9,362.8 493.0,364.9 493.2,367.9 493.3,371.7 493.5,373.3 493.6,377.3 493.8,378.5 493.9,378.9 494.1,381.4 494.2,381.2 494.4,382.8 494.6,382.1 494.7,384.2 494.9,383.8 495.0,384.4 495.2,385.5 495.3,386.4 495.5,385.1 495.6,386.1 495.8,385.5 496.0,384.6 496.1,387.0 496.3,386.0 496.4,386.8 496.6,386.8 496.7,387.3 496.9,386.8 497.0,385.9 497.2,386.0 497.3,387.1 497.5,387.2 497.7,387.5 497.8,387.2 498.0,387.4 498.1,387.1 498.3,387.8 498.4,386.8 498.6,387.3 498.7,387.3 498.9,387.5 499.0,388.1 499.2,387.0 499.4,387.5 499.5,386.8 499.7,387.4 499.8,387.1 500.0,387.3 500.7,387.7 501.4,387.6 502.1,387.9 502.8,388.6 503.5,388.3 504.1,387.7 504.8,388.4 505.5,388.6 506.2,388.4 506.9,388.0 507.6,388.8 508.3,388.4 509.0,388.3 509.7,388.3 510.4,388.7 511.1,389.4 511.8,388.5 512.5,387.7 513.2,387.6 513.9,388.5 514.6,387.6 515.3,387.9 516.0,388.3 516.7,388.7 517.4,388.4 518.1,388.5 518.8,388.2 519.5,388.9 520.2,388.9 520.9,388.4 521.6,388.6 522.2,388.1 522.9,388.7 523.6,387.9 524.3,387.8 525.0,388.8 525.7,388.1 526.4,387.7 527.1,388.3 527.8,387.9 528.5,388.4 529.2,388.3 529.9,388.4 530.6,388.5 531.3,387.7 532.0,388.6 532.7,389.0 533.4,388.5 534.1,388.1 534.8,388.6 535.5,387.9 536.2,387.9 536.9,388.2 537.6,388.4 538.3,388.5 539.0,388.6 539.6,387.5 540.3,388.0 541.0,388.4 541.7,388.2 542.4,388.1 543.1,387.7 543.8,387.9 544.5,388.3 545.2,388.6 545.9,388.9 546.6,388.3 547.3,387.5 548.0,388.2 548.7,388.1 549.4,388.5 550.1,388.5 550.8,388.9 551.5,388.7 552.2,387.6 552.9,388.2 553.6,387.8 554.3,388.5 555.0,387.9 555.7,388.1 556.4,388.8 557.0,389.2 557.7,389.1 558.4,388.2 559.1,388.0 559.8,388.5 560.5,388.4 561.2,387.9 561.9,388.4 562.6,388.7 563.3,388.1 564.0,387.8 564.7,389.1 565.4,388.4 566.1,388.5 566.8,388.6 567.5,387.7 568.2,388.0 568.9,387.4 569.6,388.0 570.3,388.4 571.0,388.4 571.7,387.9 572.4,388.2 573.1,388.2 573.8,388.1 574.5,388.1 575.1,387.6 575.8,388.3 576.5,387.9 577.2,387.7 577.9,387.0 578.6,387.3 579.3,386.8 580.0,387.6 580.7,387.5 581.4,387.8 582.1,387.7 582.8,387.8 583.5,388.0 584.2,388.3 584.9,388.1 585.6,387.4 586.3,388.2 587.0,388.4 587.7,388.4 588.4,387.9 588.5,388.4 588.7,388.1 588.8,388.2 589.0,387.7 589.1,388.0 589.3,387.6 589.5,387.5 589.6,387.9 589.8,388.2 589.9,388.1 590.1,387.2 590.2,387.3 590.4,388.3 590.5,387.7 590.7,388.1 590.8,386.9 591.0,387.7 591.2,388.4 591.3,388.1 591.5,388.3 591.6,388.1 591.8,387.6 591.9,388.0 592.1,387.2 592.2,388.1 592.4,387.3 592.5,388.2 592.7,387.5 592.9,387.0 593.0,387.4 593.2,386.7 593.3,387.0 593.5,386.1 593.6,386.7 593.8,387.1 593.9,387.0 594.1,386.2 594.2,385.4 594.4,385.8 594.6,386.9 594.7,386.3 594.9,386.6 595.0,386.0 595.2,385.0 595.3,386.1 595.5,384.9 595.6,382.4 595.8,383.6 596.0,382.9 596.1,382.7 596.3,381.8 596.4,378.9 596.6,381.4 596.7,379.9 596.9,379.6 597.0,376.4 597.2,380.4 597.3,377.3 597.5,373.9 597.7,375.1 597.8,375.9 598.0,376.5 598.1,377.9 598.3,376.3 598.4,376.6 598.6,377.3 598.7,377.6 598.9,379.4 599.0,379.4 599.2,381.2 599.4,380.9 599.5,381.2 599.7,383.1 599.8,381.4 600.0,382.5 600.1,383.2 600.3,384.1 600.4,383.3 600.6,384.5 600.7,383.7 600.9,384.9 601.1,385.3 601.2,385.3 601.4,385.0 601.5,386.0 601.7,386.1 601.8,386.5 602.0,387.2 602.1,386.2 602.3,387.2 602.4,386.6 602.6,386.8 602.8,387.4 602.9,386.6 603.1,387.6 603.2,388.4 603.4,387.5 603.5,387.6 603.7,387.6 603.8,388.0 604.0,387.8 604.1,387.7 604.3,387.6 604.5,387.4 604.6,387.5 604.8,388.0 604.9,388.0 605.1,387.1 605.2,387.7 605.4,387.4 605.5,388.8 605.7,388.7 605.9,387.5 606.0,387.9 606.2,388.6 606.3,387.5 606.5,388.1 606.6,387.4 606.8,387.9 606.9,387.6 607.6,387.8 608.3,388.2 609.0,388.3 609.7,387.3 610.4,388.3 611.1,388.4 611.8,388.1 612.5,388.0 613.2,388.4 613.9,387.5 614.6,388.6 615.3,389.4 616.0,388.6 616.7,388.8" fill="none" stroke="#fff" stroke-width="1.05" stroke-linejoin="round"/><path d="M594.2 293.0 v8 M590.6 295.0 l7.2 4 M597.8 295.0 l-7.2 4" stroke="#00e8f4" stroke-width="1.5"/></svg>
<svg class="a" style="left:139px;top:552.5px" width="434" height="16" viewBox="0 0 434 16"><path d="M32.7 0 V3 M48.2 0 V3 M63.7 0 V3 M79.1 0 V3 M94.6 0 V5 M110.1 0 V3 M125.5 0 V3 M141.0 0 V3 M156.5 0 V3 M171.9 0 V5 M187.4 0 V3 M202.9 0 V3 M218.4 0 V3 M233.8 0 V3 M249.3 0 V5 M264.8 0 V3 M280.2 0 V3 M295.7 0 V3 M311.2 0 V3 M326.6 0 V5 M342.1 0 V3 M357.6 0 V3 M373.0 0 V3 M388.5 0 V3 M404.0 0 V5 M419.4 0 V3 M434.9 0 V3 M450.4 0 V3 M465.8 0 V3 M481.3 0 V5 M496.8 0 V3 M512.2 0 V3 M527.7 0 V3 M543.2 0 V3 M558.6 0 V5 M574.1 0 V3 M589.6 0 V3 M605.1 0 V3 M620.5 0 V3" stroke="#fff" stroke-width="1"/></svg>
<div class="t" style="left:227.01px;top:556.57px;font-size:11.5px;color:#fff;transform:scaleX(0.977);transform-origin:center center;">20</div>
<div class="t" style="left:304.35px;top:556.57px;font-size:11.5px;color:#fff;transform:scaleX(0.977);transform-origin:center center;">30</div>
<div class="t" style="left:381.69px;top:556.57px;font-size:11.5px;color:#fff;transform:scaleX(0.977);transform-origin:center center;">40</div>
<div class="t" style="left:459.03px;top:556.57px;font-size:11.5px;color:#fff;transform:scaleX(0.977);transform-origin:center center;">50</div>
<div class="t" style="left:536.37px;top:556.57px;font-size:11.5px;color:#fff;transform:scaleX(0.977);transform-origin:center center;">60</div>
<div class="a" style="left:157.5px;top:162px;width:261px;height:21.5px;background:#f0f0f0;border-right:1px solid #808080;border-bottom:1px solid #808080;border-top:1px solid #fff"></div>
<div class="btn" style="left:160.2px;top:164px;width:18px;height:17.4px;"><svg width="16" height="15.4" preserveAspectRatio="none" viewBox="0 0 16 16"><path d="M3.2 1.2 L3.2 12.6 L5.8 10.2 L7.8 14.4 L9.4 13.6 L7.4 9.6 L10.8 9.4 Z" fill="#fff" stroke="#000" stroke-width="1"/><path d="M10.4 9.6 H14.6 L10.4 14.6 H14.8" fill="none" stroke="#000" stroke-width="1.2"/></svg></div>
<div class="btn" style="left:180.1px;top:164px;width:18px;height:17.4px;"><svg width="16" height="15.4" preserveAspectRatio="none" viewBox="0 0 16 16"><circle cx="7.6" cy="7.2" r="4.6" fill="#fafafa" stroke="#000" stroke-width="1.1"/><path d="M10.8 10.6 L14 14" stroke="#000" stroke-width="1.8"/></svg></div>
<div class="btnp" style="left:199.9px;top:164px;width:18px;height:17.4px;"><svg width="16" height="15.4" preserveAspectRatio="none" viewBox="0 0 16 16"><path d="M1 14.4 Q4 14 5.2 9.5 Q6 6 6.8 6 Q7.8 6 8.3 10 Q8.8 8.5 9.8 8.5 Q11 8.5 11.8 11.4 Q12.6 14 15 14.4" fill="none" stroke="#000" stroke-width="1"/><path d="M2.4 5.8 H14.4" stroke="#0000f0" stroke-width="0.9"/><path d="M7.3 0.5 V15" stroke="#0000f0" stroke-width="0.9"/></svg></div>
<div class="btn" style="left:219.8px;top:164px;width:18px;height:17.4px;"><svg width="16" height="15.4" preserveAspectRatio="none" viewBox="0 0 16 16"><path d="M1.5 14 L3 12.5 L4.5 8 L5.6 3 L6.8 8 L7.8 10.5 L9 9 L10.2 6 L11.4 10 L13 13 L14.8 14 Z" fill="#0000e0" stroke="#000" stroke-width="0.8"/></svg></div>
<div class="btn" style="left:239.7px;top:164px;width:18px;height:17.4px;"><svg width="16" height="15.4" preserveAspectRatio="none" viewBox="0 0 16 16"><text x="8" y="8" font-size="7.6" font-weight="bold" text-anchor="middle" font-family="Liberation Sans" fill="#000" textLength="11" lengthAdjust="spacingAndGlyphs">BE</text><path d="M2 12.2 Q5 13.6 8 12 Q11 10.8 14 12.2" fill="none" stroke="#0000ff" stroke-width="0.9" stroke-dasharray="1.2 1"/><rect x="1" y="11.4" width="1.8" height="1.8" fill="#0000ff"/><rect x="7.1" y="11.2" width="1.8" height="1.8" fill="#0000ff"/><rect x="13.2" y="11.4" width="1.8" height="1.8" fill="#0000ff"/></svg></div>
<div class="btn" style="left:259.6px;top:164px;width:18px;height:17.4px;"><svg width="16" height="15.4" preserveAspectRatio="none" viewBox="0 0 16 16"><text x="8" y="8" font-size="7.6" font-weight="bold" text-anchor="middle" font-family="Liberation Sans" fill="#000" textLength="11" lengthAdjust="spacingAndGlyphs">DE</text><path d="M2 12.2 Q5 13.6 8 12 Q11 10.8 14 12.2" fill="none" stroke="#0000ff" stroke-width="0.9" stroke-dasharray="1.2 1"/><rect x="1" y="11.4" width="1.8" height="1.8" fill="#0000ff"/><rect x="7.1" y="11.2" width="1.8" height="1.8" fill="#0000ff"/><rect x="13.2" y="11.4" width="1.8" height="1.8" fill="#0000ff"/></svg></div>
<div class="btn" style="left:279.4px;top:164px;width:18px;height:17.4px;"><svg width="16" height="15.4" preserveAspectRatio="none" viewBox="0 0 16 16"><path d="M1 14 Q3.4 13.5 4.4 9 Q5.4 3 6.2 3 Q7 3 8 9 Q8.7 12.5 9.4 9.5 Q10.2 5 10.9 5 Q11.7 5 12.6 10 Q13.4 13.8 15.4 14" fill="none" stroke="#000" stroke-width="0.95"/><path d="M3.4 14 Q5.4 13 6.2 9.5 M8.6 14 Q10.2 13 10.9 10 Q11.4 13 13 14" fill="none" stroke="#000" stroke-width="0.7"/></svg></div>
<div class="btn" style="left:299.3px;top:164px;width:18px;height:17.4px;"><svg width="16" height="15.4" preserveAspectRatio="none" viewBox="0 0 16 16"><text x="8" y="11.6" font-size="9" text-anchor="middle" font-family="Liberation Sans" fill="#000" textLength="14.4" lengthAdjust="spacingAndGlyphs">Kα2</text></svg></div>
<div class="btn" style="left:319.2px;top:164px;width:18px;height:17.4px;"><svg width="16" height="15.4" preserveAspectRatio="none" viewBox="0 0 16 16"><text x="8" y="9.6" font-size="11.5" font-weight="bold" text-anchor="middle" font-family="Liberation Sans" fill="#000">C</text><path d="M1.5 13.4 H14.5" stroke="#000" stroke-width="1.6" stroke-dasharray="1.4 1.2"/></svg></div>
<div class="btn" style="left:339.0px;top:164px;width:18px;height:17.4px;"><svg width="16" height="15.4" preserveAspectRatio="none" viewBox="0 0 16 16"><path d="M1.5 14 L6 3.5 L10.5 14 M3.5 14 L6 8 L8.5 14" fill="none" stroke="#b4b4b4" stroke-width="0.9"/><path d="M12.8 4 V13" stroke="#a8a8a8" stroke-width="1.2"/><path d="M12.8 2.2 L14.6 5 H11 Z M12.8 14.6 L14.6 11.8 H11 Z" fill="#a8a8a8"/></svg></div>
<div class="btn" style="left:358.9px;top:164px;width:18px;height:17.4px;"><svg width="16" height="15.4" preserveAspectRatio="none" viewBox="0 0 16 16"><path d="M1.5 14 H11" stroke="#000" stroke-width="1"/><path d="M3 13.5 V7" stroke="#f00000" stroke-width="1.3"/><path d="M5.3 13.5 V3" stroke="#4040ff" stroke-width="1.3"/><path d="M7.5 13.5 V8" stroke="#f000f0" stroke-width="1.3"/><path d="M9.5 13.5 V10" stroke="#f00000" stroke-width="1.1"/><path d="M13 4.5 V12" stroke="#000" stroke-width="1.3"/><path d="M13 2 L15 5.2 H11 Z M13 14.6 L15 11.4 H11 Z" fill="#000"/></svg></div>
<div class="btn" style="left:378.8px;top:164px;width:18px;height:17.4px;"><svg width="16" height="15.4" preserveAspectRatio="none" viewBox="0 0 16 16"><rect x="1.2" y="1.4" width="13.6" height="13.2" fill="#000"/><path d="M2 8 H14 M8 2.4 V13.6" stroke="#00c4d4" stroke-width="1.25"/></svg></div>
<svg class="a" style="left:399.2px;top:165px" width="16" height="16" viewBox="0 0 16 16"><circle cx="8" cy="8" r="6.6" fill="#008a00" stroke="#003c00" stroke-width="1.3"/><path d="M5.6 5.8 Q5.6 3.4000000000000004 8 3.4000000000000004 Q10.6 3.4000000000000004 10.6 5.6 Q10.6 7 8.9 7.8 Q8 8.4 8 9.6" fill="none" stroke="#fff" stroke-width="1.65" stroke-linecap="butt"/><rect x="7" y="10.7" width="2" height="2" fill="#fff"/></svg>
<div class="a" style="left:774.2px;top:88.5px;width:17.8px;height:464px;background:#f0f0f0;"></div>
<div class="a" style="left:774.2px;top:88.5px;width:1.4px;height:464px;background:#8c8c8c;"></div>
<div class="btn" style="left:776px;top:89.5px;width:15.2px;height:10.5px;"><svg width="13" height="8.5" viewBox="0 0 13 8.5" ><path d="M3.5 1.2 L9.5 7.2 M9.5 1.2 L3.5 7.2" stroke="#000" stroke-width="1"/></svg></div>
<div class="btn" style="left:776px;top:102px;width:15.2px;height:14.5px;"><svg width="13" height="12.5" viewBox="0 0 13 12.5" ><path d="M2.6 1 V11.5" stroke="#6868c8" stroke-width="1.4"/><path d="M6.4 1 V11.5" stroke="#1010a0" stroke-width="2"/><path d="M10.4 1 V11.5" stroke="#1010a0" stroke-width="2.2"/><path d="M10.4 0 L12 2.5 H8.8 Z M10.4 12.5 L12 10 H8.8 Z" fill="#1010a0"/></svg></div>
<div class="a" style="left:776.6px;top:116.7px;width:14.2px;height:418.3px;background:#202020;"></div>
<div class="a" style="left:777.6px;top:117.5px;width:12.3px;height:8.91px;background:#111111;"></div>
<div class="a" style="left:777.6px;top:127.31px;width:12.3px;height:8.91px;background:#222222;"></div>
<div class="a" style="left:777.6px;top:137.12px;width:12.3px;height:8.91px;background:#333333;"></div>
<div class="a" style="left:777.6px;top:146.93px;width:12.3px;height:8.91px;background:#444444;"></div>
<div class="a" style="left:777.6px;top:156.74px;width:12.3px;height:8.91px;background:#555555;"></div>
<div class="a" style="left:777.6px;top:166.55px;width:12.3px;height:8.91px;background:#666666;"></div>
<div class="a" style="left:777.6px;top:176.36px;width:12.3px;height:8.91px;background:#777777;"></div>
<div class="a" style="left:777.6px;top:186.17px;width:12.3px;height:8.91px;background:#888888;"></div>
<div class="a" style="left:777.6px;top:195.98px;width:12.3px;height:8.91px;background:#999999;"></div>
<div class="a" style="left:777.6px;top:205.79px;width:12.3px;height:8.91px;background:#aaaaaa;"></div>
<div class="a" style="left:777.6px;top:215.6px;width:12.3px;height:8.91px;background:#bbbbbb;"></div>
<div class="a" style="left:777.6px;top:225.41px;width:12.3px;height:8.91px;background:#cccccc;"></div>
<div class="a" style="left:777.6px;top:235.22px;width:12.3px;height:8.91px;background:#dddddd;"></div>
<div class="a" style="left:777.6px;top:245.03px;width:12.3px;height:8.91px;background:#eeeeee;"></div>
<div class="a" style="left:777.6px;top:254.84px;width:12.3px;height:8.91px;background:#ffffff;"></div>
<div class="a" style="left:777.6px;top:264.65px;width:12.3px;height:8.91px;background:#000000;"></div>
<div class="a" style="left:777.6px;top:274.46px;width:12.3px;height:8.91px;background:#ff8080;"></div>
<div class="a" style="left:777.6px;top:284.27px;width:12.3px;height:8.91px;background:#ff0000;"></div>
<div class="a" style="left:777.6px;top:294.08px;width:12.3px;height:8.91px;background:#804040;"></div>
<div class="a" style="left:777.6px;top:303.89px;width:12.3px;height:8.91px;background:#800000;"></div>
<div class="a" style="left:777.6px;top:313.7px;width:12.3px;height:8.91px;background:#fffbe8;"></div>
<div class="a" style="left:777.6px;top:323.51px;width:12.3px;height:8.91px;background:#ffff80;"></div>
<div class="a" style="left:777.6px;top:333.32px;width:12.3px;height:8.91px;background:#ffff00;"></div>
<div class="a" style="left:777.6px;top:343.13px;width:12.3px;height:8.91px;background:#ff8000;"></div>
<div class="a" style="left:777.6px;top:352.94px;width:12.3px;height:8.91px;background:#fffbf0;"></div>
<div class="a" style="left:777.6px;top:362.75px;width:12.3px;height:8.91px;background:#80ff00;"></div>
<div class="a" style="left:777.6px;top:372.56px;width:12.3px;height:8.91px;background:#00ff00;"></div>
<div class="a" style="left:777.6px;top:382.37px;width:12.3px;height:8.91px;background:#008000;"></div>
<div class="a" style="left:777.6px;top:392.18px;width:12.3px;height:8.91px;background:#00ff80;"></div>
<div class="a" style="left:777.6px;top:401.99px;width:12.3px;height:8.91px;background:#c0dcc0;"></div>
<div class="a" style="left:777.6px;top:411.8px;width:12.3px;height:8.91px;background:#008080;"></div>
<div class="a" style="left:777.6px;top:421.61px;width:12.3px;height:8.91px;background:#008040;"></div>
<div class="a" style="left:777.6px;top:431.42px;width:12.3px;height:8.91px;background:#80ffff;"></div>
<div class="a" style="left:777.6px;top:441.23px;width:12.3px;height:8.91px;background:#00ffff;"></div>
<div class="a" style="left:777.6px;top:451.04px;width:12.3px;height:8.91px;background:#004080;"></div>
<div class="a" style="left:777.6px;top:460.85px;width:12.3px;height:8.91px;background:#0000ff;"></div>
<div class="a" style="left:777.6px;top:470.66px;width:12.3px;height:8.91px;background:#0080ff;"></div>
<div class="a" style="left:777.6px;top:480.47px;width:12.3px;height:8.91px;background:#a6caf0;"></div>
<div class="a" style="left:777.6px;top:490.28px;width:12.3px;height:8.91px;background:#8080ff;"></div>
<div class="a" style="left:777.6px;top:500.09px;width:12.3px;height:8.91px;background:#000040;"></div>
<div class="a" style="left:777.6px;top:509.9px;width:12.3px;height:8.91px;background:#ff80c0;"></div>
<div class="a" style="left:777.6px;top:519.71px;width:12.3px;height:8.91px;background:#8080c0;"></div>
<div class="a" style="left:777.6px;top:529.52px;width:12.3px;height:4.68px;background:#800040;"></div>
<div class="btn" style="left:776.3px;top:535.5px;width:15px;height:7px;border-color:#fff #a0a0a0 #a0a0a0 #fff"><svg width="13" height="5" viewBox="0 0 13 5" ><path d="M6.5 1 L8.5 4 H4.5 Z" fill="#000"/></svg></div>
<div class="btn" style="left:776.3px;top:543px;width:15px;height:7px;border-color:#fff #a0a0a0 #a0a0a0 #fff"><svg width="13" height="5" viewBox="0 0 13 5" ><path d="M6.5 4 L8.5 1 H4.5 Z" fill="#000"/></svg></div>
<div class="a" style="left:573.5px;top:552.5px;width:218.5px;height:16.5px;background:#f0f0f0;"></div>
<div class="btn" style="left:573.3px;top:553px;width:13.3px;height:15.5px;"><svg width="11.3" height="13.5" viewBox="0 0 11.3 13.5" ><path d="M5.5 1.5 L7.3 4 H3.7 Z M5.5 12 L7.3 9.5 H3.7 Z" fill="#000"/><path d="M0 6.8 H12" stroke="#a0a0a0" stroke-width="0.8"/></svg></div>
<div class="btn" style="left:586.8px;top:553px;width:13.3px;height:15.5px;"><svg width="11.3" height="13.5" viewBox="0 0 11.3 13.5" ><path d="M5.5 1.5 L7.3 4 H3.7 Z M5.5 12 L7.3 9.5 H3.7 Z" fill="#000"/><path d="M0 6.8 H12" stroke="#a0a0a0" stroke-width="0.8"/></svg></div>
<div class="btn" style="left:601.3px;top:553px;width:13.4px;height:15.5px;"></div>
<div class="t" style="left:605.32px;top:555.84px;font-size:10px;color:#000;">n</div>
<div class="btn" style="left:616px;top:553px;width:13.4px;height:15.5px;"></div>
<div class="t" style="left:618.35px;top:555.84px;font-size:10px;color:#000;">%</div>
<div class="btn" style="left:630.7px;top:553px;width:13.4px;height:15.5px;"></div>
<div class="t" style="left:634.72px;top:555.84px;font-size:10px;color:#000;">h</div>
<div class="btn" style="left:645.4px;top:553px;width:13.4px;height:15.5px;"></div>
<div class="t" style="left:649.42px;top:555.84px;font-size:10px;color:#000;">#</div>
<div class="btn" style="left:660.1px;top:553px;width:13.4px;height:15.5px;"></div>
<div class="t" style="left:665.60px;top:555.84px;font-size:10px;color:#000;">|</div>
<div class="btn" style="left:674.8px;top:553px;width:13.4px;height:15.5px;"></div>
<div class="t" style="left:679.10px;top:555.84px;font-size:10px;color:#000;">v</div>
<div class="btn" style="left:689.4px;top:553px;width:13.6px;height:15.5px;"><svg width="11.6" height="13.5" viewBox="0 0 11.6 13.5" ><rect x="1" y="1.5" width="9.8" height="10" fill="#f0e000" stroke="#000" stroke-width="0.8"/><path d="M3 10 V7 M5 10 V8.5 M7 10 V8.5 M8.6 10 V5.5" stroke="#000" stroke-width="1.2"/></svg></div>
<div class="btnp" style="left:704.2px;top:553px;width:13.6px;height:15.5px;"></div>
<div class="t" style="left:704.08px;top:556.16px;font-size:9.5px;color:#0000ff;transform:scaleX(0.737);transform-origin:center center;">CF.</div>
<div class="btnp" style="left:719.2px;top:553px;width:13.6px;height:15.5px;"><svg width="11.6" height="13.5" viewBox="0 0 11.6 13.5" ><path d="M2.8 3.5 L8.8 10 M8.8 3.5 L2.8 10" stroke="#f00000" stroke-width="1.1"/></svg></div>
<div class="btnp" style="left:734.6px;top:553px;width:13.6px;height:15.5px;"><svg width="11.6" height="13.5" viewBox="0 0 11.6 13.5" ><path d="M1.8 2.5 V11" stroke="#000" stroke-width="1.2"/><path d="M3.2 6.8 L6.6 3.6 V10 Z" fill="#0000ff"/><path d="M6 6.8 H10.6" stroke="#0000ff" stroke-width="2.2"/></svg></div>
<div class="btnp" style="left:749.3px;top:553px;width:13.6px;height:15.5px;"><svg width="11.6" height="13.5" viewBox="0 0 11.6 13.5" ><path d="M2.5 6.8 H9.5" stroke="#0000ff" stroke-width="2.4"/></svg></div>
<div class="btnp" style="left:764px;top:553px;width:13.6px;height:15.5px;"><svg width="11.6" height="13.5" viewBox="0 0 11.6 13.5" ><path d="M10 2.5 V11" stroke="#000" stroke-width="1.2"/><path d="M8.6 6.8 L5.2 3.6 V10 Z" fill="#0000ff"/><path d="M1.2 6.8 H5.8" stroke="#0000ff" stroke-width="2.2"/></svg></div>
<div class="btnp" style="left:778.7px;top:553px;width:13px;height:15.5px;"><svg width="11" height="13.5" viewBox="0 0 11 13.5" ><path d="M3.8 2.5 V11 M7.2 2.5 V11 M2 5 H9.4 M2 8.5 H9.4" stroke="#0000ff" stroke-width="1.3"/></svg></div>
<div class="a" style="left:9.5px;top:568.5px;width:782.5px;height:15.5px;background:#f0f0f0;"></div>
<div class="a" style="left:0px;top:584px;width:800px;height:1px;background:#3c3c30;"></div>
<div class="sb" style="left:9.8px;top:570.3px;width:80px;height:13.2px"></div>
<div class="t" style="left:22.78px;top:573.14px;font-size:10px;color:#000;transform:scaleX(0.918);transform-origin:center center;">Raw Pattern</div>
<div class="sb" style="left:92.5px;top:570.3px;width:79px;height:13.2px"></div>
<div class="t" style="left:114.43px;top:573.14px;font-size:10px;color:#000;transform:scaleX(0.913);transform-origin:center center;">5 Peaks</div>
<div class="sb" style="left:174px;top:570.3px;width:65.6px;height:13.2px"></div>
<div class="t" style="left:183.25px;top:573.14px;font-size:10px;color:#000;transform:scaleX(0.925);transform-origin:center center;">2T=13.683</div>
<div class="sb" style="left:241.8px;top:570.3px;width:66.5px;height:13.2px"></div>
<div class="t" style="left:254.55px;top:573.14px;font-size:10px;color:#000;transform:scaleX(0.900);transform-origin:center center;">d=6.4664</div>
<div class="sb" style="left:311px;top:570.3px;width:66.5px;height:13.2px"></div>
<div class="t" style="left:334.88px;top:573.14px;font-size:10px;color:#000;transform:scaleX(0.820);transform-origin:center center;">I=61</div>
<div class="sb" style="left:380px;top:570.3px;width:68px;height:13.2px"></div>
<div class="t" style="left:390.88px;top:573.14px;font-size:10px;color:#000;transform:scaleX(0.929);transform-origin:center center;">Two-Theta</div>
<div class="sb" style="left:451px;top:570.3px;width:24.5px;height:13.2px;border-color:#b4b4b4 #fff #fff #b4b4b4"></div>
<div class="t" style="left:453.67px;top:573.14px;font-size:10px;color:#8a8a8a;transform:scaleX(0.913);transform-origin:center center;">SAV</div>
<div class="sb" style="left:477.5px;top:570.3px;width:24.5px;height:13.2px;border-color:#b4b4b4 #fff #fff #b4b4b4"></div>
<div class="t" style="left:479.80px;top:573.14px;font-size:10px;color:#8a8a8a;transform:scaleX(0.880);transform-origin:center center;">PKS</div>
<div class="sb" style="left:504.5px;top:570.3px;width:24.5px;height:13.2px;border-color:#b4b4b4 #fff #fff #b4b4b4"></div>
<div class="t" style="left:506.52px;top:573.14px;font-size:10px;color:#8a8a8a;transform:scaleX(0.856);transform-origin:center center;">DSP</div>
<div class="sb" style="left:532px;top:570.3px;width:24.5px;height:13.2px;border-color:#b4b4b4 #fff #fff #b4b4b4"></div>
<div class="t" style="left:534.30px;top:573.14px;font-size:10px;color:#8a8a8a;transform:scaleX(0.880);transform-origin:center center;">PDF</div>
<div class="sb" style="left:559px;top:570.3px;width:24.5px;height:13.2px;border-color:#b4b4b4 #fff #fff #b4b4b4"></div>
<div class="t" style="left:561.86px;top:573.14px;font-size:10px;color:#8a8a8a;transform:scaleX(0.932);transform-origin:center center;">PFT</div>
<div class="sb" style="left:585.5px;top:570.3px;width:24.5px;height:13.2px;border-color:#b4b4b4 #fff #fff #b4b4b4"></div>
<div class="t" style="left:587.80px;top:573.14px;font-size:10px;color:#8a8a8a;transform:scaleX(0.880);transform-origin:center center;">RPT</div>
<div class="sb" style="left:612.5px;top:570.3px;width:24.5px;height:13.2px;border-color:#b4b4b4 #fff #fff #b4b4b4"></div>
<div class="t" style="left:616.46px;top:573.14px;font-size:10px;color:#8a8a8a;transform:scaleX(1.056);transform-origin:center center;">PID</div>
<div class="sb" style="left:638.7px;top:570.3px;width:24.5px;height:13.2px;border-color:#b4b4b4 #fff #fff #b4b4b4"></div>
<div class="t" style="left:641.28px;top:573.14px;font-size:10px;color:#8a8a8a;transform:scaleX(0.905);transform-origin:center center;">SZS</div>
<div class="sb" style="left:665.5px;top:570.3px;width:24.5px;height:13.2px;border-color:#b4b4b4 #fff #fff #b4b4b4"></div>
<div class="t" style="left:669.74px;top:573.14px;font-size:10px;color:#8a8a8a;transform:scaleX(1.092);transform-origin:center center;">KSI</div>
<div class="sb" style="left:691.5px;top:570.3px;width:24.5px;height:13.2px;border-color:#b4b4b4 #fff #fff #b4b4b4"></div>
<div class="t" style="left:696.30px;top:573.14px;font-size:10px;color:#8a8a8a;transform:scaleX(1.173);transform-origin:center center;">FIT</div>
<div class="sb" style="left:718px;top:570.3px;width:24.5px;height:13.2px;border-color:#b4b4b4 #fff #fff #b4b4b4"></div>
<div class="t" style="left:720.85px;top:573.14px;font-size:10px;color:#8a8a8a;transform:scaleX(0.931);transform-origin:center center;">2TH</div>
<div class="sb" style="left:745px;top:570.3px;width:24.5px;height:13.2px;border-color:#b4b4b4 #fff #fff #b4b4b4"></div>
<div class="t" style="left:747.02px;top:573.14px;font-size:10px;color:#8a8a8a;transform:scaleX(0.856);transform-origin:center center;">ABC</div>
<div class="sb" style="left:771.7px;top:570.3px;width:24.5px;height:13.2px;border-color:#b4b4b4 #fff #fff #b4b4b4"></div>
<div class="t" style="left:773.44px;top:573.14px;font-size:10px;color:#8a8a8a;transform:scaleX(0.834);transform-origin:center center;">RRP</div>
<div class="a" style="left:-0.19999999999999996px;top:189.7px;width:557.5px;height:203.10000000000002px;border-radius:7px 7px 4px 4px;background:rgba(0,0,0,0.35);filter:blur(1.5px)"></div>
<div class="a" style="left:0.8px;top:189.7px;width:555.5px;height:201.10000000000002px;border-radius:6px 6px 3px 3px;border:1px solid;border-color:#5e5e5e #808080 #9a9a9a #5e5e5e;overflow:hidden;background:linear-gradient(90deg,#8f8678 0,#c9c6c0 3px,#ececea 6px,#f6f6f6 10px,#f4f6f6 131px,#a8d4d4 135px,#2c9494 139px,#088282 143px,#067c7c 151px,#045c5c 154px,#022a2a 157px,#000 161px)"><div class="a" style="left:0;top:0;right:0;bottom:0;border-radius:5px 5px 2px 2px;border:1px solid rgba(255,255,255,0.28)"></div><div class="a" style="left:158px;right:0;top:0;bottom:0;background:linear-gradient(rgba(255,255,255,0.17),rgba(255,255,255,0.15) 24px,rgba(255,255,255,0.05) 40px,rgba(255,255,255,0) 70px)"></div><div class="a" style="left:0;right:0;bottom:0;height:8.5px;background:linear-gradient(90deg,#a8aaa8 0,#c4c8cc 8px,#bcc2c8 60px,#c8ced4 120px,#eef4f6 136px,#9ab4b8 143px,#3a5c60 150px,#0a1616 157px,#000 163px)"></div><div class="a" style="left:0;width:150px;bottom:0;height:8.5px;background:linear-gradient(rgba(255,255,255,.55),rgba(255,255,255,0) 40%,rgba(0,0,0,.12))"></div><div class="a" style="left:0;top:24px;bottom:8px;width:5.5px;background:linear-gradient(90deg,#8c867c,#c4c4c2 40%,#dcdcdc 80%,#c0c0c0)"></div><div class="a" style="left:146px;top:5px;width:186px;height:15px;background:rgba(255,255,255,0.44);filter:blur(3.5px);border-radius:7px"></div><div class="a" style="left:100px;top:5px;width:60px;height:15px;background:rgba(255,255,255,0.5);filter:blur(3.5px);border-radius:7px"></div></div>
<svg class="a" style="left:7.3px;top:196.8px" width="13" height="10" viewBox="0 0 13 10"><path d="M0.3 5 H4.4" stroke="#000" stroke-width="1.1"/><path d="M4.6 1 V9 M12 1.6 V8.6" stroke="#000" stroke-width="1.5"/><path d="M5 3 Q8.5 4.4 11.6 2.4 V7.8 Q8.5 5.8 5 7.4 Z" fill="#c8c8c8" stroke="#000" stroke-width="0.9"/><path d="M5 7.4 Q8.5 6 11.6 8" stroke="#000" stroke-width="1.3" fill="none"/></svg>
<div class="t" style="left:25.00px;top:196.09px;font-size:11px;color:#0c0c20;transform:scaleX(0.994);transform-origin:left center;">Peak ID Extended Report (5 Peaks, Max P/N = 21.5) - [B1.raw]</div>
<div class="a" style="left:462.5px;top:190px;width:90px;height:17px;border:1px solid #5c5c5c;border-top:none;border-radius:0 0 4px 4px;background:linear-gradient(#3a3a3a,#2c2c2c 45%,#1c1c1c 50%,#242424)"></div>
<div class="a" style="left:488px;top:190px;width:1px;height:16.5px;background:#585858;"></div>
<div class="a" style="left:510.5px;top:190px;width:1px;height:16.5px;background:#585858;"></div>
<div class="a" style="left:516px;top:190px;width:22px;height:9px;background:radial-gradient(ellipse at 45% 0%,rgba(40,190,210,0.6),rgba(0,0,0,0) 70%)"></div>
<svg class="a" style="left:462px;top:190px" width="92" height="17" viewBox="0 0 92 17"><rect x="9.2" y="8" width="9.2" height="3.2" fill="#f4f4f4" stroke="#555" stroke-width="0.5"/><rect x="33.4" y="4.8" width="8" height="5.8" fill="none" stroke="#f4f4f4" stroke-width="1.7"/><path d="M65.2 4.2 L73.2 10.8 M73.2 4.2 L65.2 10.8" stroke="#f4f4f4" stroke-width="2.3"/></svg>
<div class="a" style="left:6px;top:213.5px;width:544.6px;height:168.89999999999998px;background:#f0f0f0;border:1px solid #9a9a9a;border-color:#9c9c9c #b0b0b0 #8c8c8c #8c8c8c"></div>
<div class="a" style="left:4px;top:390px;width:138px;height:1px;background:#4c4c4c;"></div>
<div class="a" style="left:142px;top:390px;width:16px;height:1px;background:linear-gradient(90deg,#4c4c4c,#9a9a9a);"></div>
<div class="btn" style="left:9.7px;top:215.5px;width:35.5px;height:17.5px;"></div>
<div class="t" style="left:14.66px;top:219.34px;font-size:10px;color:#000;"><u>C</u>lose</div>
<div class="btn" style="left:47.5px;top:215.5px;width:32.5px;height:17.5px;"></div>
<div class="t" style="left:53.47px;top:219.34px;font-size:10px;color:#000;transform:scaleX(1.021);transform-origin:center center;"><u>P</u>rint</div>
<div class="btn" style="left:82px;top:215.5px;width:40px;height:17.5px;"></div>
<div class="t" style="left:87.55px;top:219.34px;font-size:10px;color:#000;transform:scaleX(1.021);transform-origin:center center;"><u>E</u>xport</div>
<div class="btn" style="left:124px;top:215.5px;width:35px;height:17.5px;"></div>
<div class="t" style="left:129.83px;top:219.34px;font-size:10px;color:#000;transform:scaleX(1.028);transform-origin:center center;"><u>C</u>opy</div>
<div class="btn" style="left:160.5px;top:215.5px;width:35px;height:17.5px;"></div>
<div class="t" style="left:164.94px;top:219.34px;font-size:10px;color:#000;transform:scaleX(1.014);transform-origin:center center;"><u>E</u>rase</div>
<div class="btn" style="left:199.5px;top:215.3px;width:20.3px;height:18px;"><svg width="18.3" height="16" viewBox="0 0 18.3 16" ><path d="M5.6 3 L8 6.2 H3.2 Z M5.6 14.4 L8 11.2 H3.2 Z" fill="#0000ff"/><path d="M5.6 6 V11.4" stroke="#0000ff" stroke-width="1.2"/><rect x="9.4" y="3" width="6.4" height="4.6" fill="#000"/><path d="M12.6 9.4 L15 12.4 H10.2 Z" fill="#0000ff"/><path d="M10 13.6 H15.2" stroke="#0000ff" stroke-width="1.1"/></svg></div>
<div class="sunk" style="left:225px;top:218px;width:11px;height:11px;border-color:#6a6a6a #e0e0e0 #e0e0e0 #6a6a6a"></div>
<div class="t" style="left:241.00px;top:219.34px;font-size:10px;color:#000;transform:scaleX(0.891);transform-origin:left center;">Color Phases</div>
<div class="sunk" style="left:300px;top:218px;width:11px;height:11px;border-color:#6a6a6a #e0e0e0 #e0e0e0 #6a6a6a"></div>
<div class="t" style="left:316.00px;top:219.34px;font-size:10px;color:#000;transform:scaleX(0.900);transform-origin:left center;">Color Entire Row</div>
<div class="sunk" style="left:389.5px;top:216px;width:156.5px;height:15px;border-color:#8a8a8a #c8c8c8 #c8c8c8 #8a8a8a"></div>
<div class="btn" style="left:532.6px;top:217px;width:12.6px;height:13px;background:#ececec;border-color:#fff #c0c0c0 #c0c0c0 #fff"><svg width="11" height="10" viewBox="0 0 11 10" ><path d="M2 3.8 H9 L5.5 8 Z" fill="#9a9a9a"/></svg></div>
<div class="a" style="left:9.5px;top:234.5px;width:538px;height:148px;background:#fff;border-top:1px solid #8c8c8c;border-left:1px solid #8c8c8c"></div>
<div class="a" style="left:10.5px;top:235.5px;width:537px;height:13.2px;background:#f0f0f0;"></div>
<div class="cell" style="left:10px;top:235.5px;width:19.5px;height:13.2px"></div>
<div class="cell" style="left:29.5px;top:235.5px;width:41.7px;height:13.2px"></div>
<div class="cell" style="left:71.2px;top:235.5px;width:38.6px;height:13.2px"></div>
<div class="cell" style="left:109.8px;top:235.5px;width:36.6px;height:13.2px"></div>
<div class="cell" style="left:146.4px;top:235.5px;width:44.2px;height:13.2px"></div>
<div class="cell" style="left:190.6px;top:235.5px;width:63.4px;height:13.2px"></div>
<div class="cell" style="left:254px;top:235.5px;width:36.5px;height:13.2px"></div>
<div class="cell" style="left:290.5px;top:235.5px;width:33.6px;height:13.2px"></div>
<div class="cell" style="left:324.1px;top:235.5px;width:38.6px;height:13.2px"></div>
<div class="cell" style="left:362.7px;top:235.5px;width:41.7px;height:13.2px"></div>
<div class="cell" style="left:404.4px;top:235.5px;width:37.2px;height:13.2px"></div>
<div class="t" style="left:19.02px;top:238.84px;font-size:10px;color:#000;transform:scaleX(1.133);transform-origin:center center;">#</div>
<div class="t" style="left:33.37px;top:238.84px;font-size:10px;color:#000;transform:scaleX(0.905);transform-origin:center center;">2-Theta</div>
<div class="t" style="left:86.11px;top:238.84px;font-size:10px;color:#000;transform:scaleX(0.843);transform-origin:center center;">d(?)</div>
<div class="t" style="left:114.29px;top:238.84px;font-size:10px;color:#000;transform:scaleX(0.917);transform-origin:center center;">Height</div>
<div class="t" style="left:150.70px;top:238.84px;font-size:10px;color:#000;transform:scaleX(0.878);transform-origin:center center;">Height%</div>
<div class="t" style="left:194.48px;top:238.84px;font-size:10px;color:#000;transform:scaleX(0.882);transform-origin:center center;">Phase ID</div>
<div class="t" style="left:267.61px;top:238.84px;font-size:10px;color:#000;transform:scaleX(0.928);transform-origin:center center;">d(?)</div>
<div class="t" style="left:309.46px;top:238.84px;font-size:10px;color:#000;transform:scaleX(0.805);transform-origin:center center;">I%</div>
<div class="t" style="left:329.72px;top:238.84px;font-size:10px;color:#000;transform:scaleX(0.946);transform-origin:center center;">( h k l )</div>
<div class="t" style="left:368.37px;top:238.84px;font-size:10px;color:#000;transform:scaleX(0.934);transform-origin:center center;">2-Theta</div>
<div class="t" style="left:414.33px;top:238.84px;font-size:10px;color:#000;transform:scaleX(0.882);transform-origin:center center;">Delta</div>
<div class="a" style="left:10.5px;top:250.5px;width:431.5px;height:12px;background:#f0f0f0;"></div>
<div class="t" style="left:17.82px;top:252.64px;font-size:10px;color:#000;transform:scaleX(0.953);transform-origin:center center;">1</div>
<div class="t" style="left:36.11px;top:252.64px;font-size:10px;color:#000;transform:scaleX(0.943);transform-origin:right center;">38.719</div>
<div class="t" style="left:74.41px;top:252.64px;font-size:10px;color:#000;transform:scaleX(0.943);transform-origin:right center;">2.3237</div>
<div class="t" style="left:125.81px;top:252.64px;font-size:10px;color:#000;transform:scaleX(0.944);transform-origin:right center;">126</div>
<div class="t" style="left:172.50px;top:252.64px;font-size:10px;color:#000;transform:scaleX(0.942);transform-origin:right center;">6.7</div>
<div class="t" style="left:17.82px;top:264.64px;font-size:10px;color:#0000e8;transform:scaleX(0.953);transform-origin:center center;">2</div>
<div class="t" style="left:36.11px;top:264.64px;font-size:10px;color:#0000e8;transform:scaleX(0.943);transform-origin:right center;">40.519</div>
<div class="t" style="left:74.41px;top:264.64px;font-size:10px;color:#0000e8;transform:scaleX(0.943);transform-origin:right center;">2.2245</div>
<div class="t" style="left:120.25px;top:264.64px;font-size:10px;color:#0000e8;transform:scaleX(0.944);transform-origin:right center;">1869</div>
<div class="t" style="left:161.37px;top:264.64px;font-size:10px;color:#0000e8;transform:scaleX(0.943);transform-origin:right center;">100.0</div>
<div class="t" style="left:256.41px;top:264.64px;font-size:10px;color:#0000e8;transform:scaleX(0.943);transform-origin:right center;">2.2247</div>
<div class="t" style="left:294.97px;top:264.64px;font-size:10px;color:#0000e8;transform:scaleX(0.943);transform-origin:right center;">100.0</div>
<div class="t" style="left:370.81px;top:264.64px;font-size:10px;color:#0000e8;transform:scaleX(0.943);transform-origin:right center;">40.515</div>
<div class="t" style="left:407.64px;top:264.64px;font-size:10px;color:#0000e8;transform:scaleX(0.952);transform-origin:right center;">-0.004</div>
<div class="t" style="left:197.00px;top:264.64px;font-size:10px;color:#0000e8;transform:scaleX(0.899);transform-origin:left center;">Molybdenum</div>
<div class="t" style="left:330.50px;top:264.64px;font-size:10px;color:#0000e8;transform:scaleX(0.915);transform-origin:left center;">( 1 1 0)</div>
<div class="t" style="left:17.82px;top:276.64px;font-size:10px;color:#000;transform:scaleX(0.953);transform-origin:center center;">3</div>
<div class="t" style="left:36.11px;top:276.64px;font-size:10px;color:#000;transform:scaleX(0.943);transform-origin:right center;">58.640</div>
<div class="t" style="left:74.41px;top:276.64px;font-size:10px;color:#000;transform:scaleX(0.943);transform-origin:right center;">1.5730</div>
<div class="t" style="left:125.81px;top:276.64px;font-size:10px;color:#000;transform:scaleX(0.944);transform-origin:right center;">292</div>
<div class="t" style="left:166.93px;top:276.64px;font-size:10px;color:#000;transform:scaleX(0.943);transform-origin:right center;">15.6</div>
<div class="t" style="left:256.41px;top:276.64px;font-size:10px;color:#000;transform:scaleX(0.943);transform-origin:right center;">1.5738</div>
<div class="t" style="left:300.53px;top:276.64px;font-size:10px;color:#000;transform:scaleX(0.943);transform-origin:right center;">16.0</div>
<div class="t" style="left:370.81px;top:276.64px;font-size:10px;color:#000;transform:scaleX(0.943);transform-origin:right center;">58.608</div>
<div class="t" style="left:407.64px;top:276.64px;font-size:10px;color:#000;transform:scaleX(0.952);transform-origin:right center;">-0.032</div>
<div class="t" style="left:197.00px;top:276.64px;font-size:10px;color:#000;transform:scaleX(0.899);transform-origin:left center;">Molybdenum</div>
<div class="t" style="left:330.50px;top:276.64px;font-size:10px;color:#000;transform:scaleX(0.915);transform-origin:left center;">( 2 0 0)</div>
<div class="t" style="left:17.82px;top:288.64px;font-size:10px;color:#000;transform:scaleX(0.953);transform-origin:center center;">4</div>
<div class="t" style="left:36.11px;top:288.64px;font-size:10px;color:#000;transform:scaleX(0.943);transform-origin:right center;">73.661</div>
<div class="t" style="left:74.41px;top:288.64px;font-size:10px;color:#000;transform:scaleX(0.943);transform-origin:right center;">1.2850</div>
<div class="t" style="left:125.81px;top:288.64px;font-size:10px;color:#000;transform:scaleX(0.944);transform-origin:right center;">396</div>
<div class="t" style="left:166.93px;top:288.64px;font-size:10px;color:#000;transform:scaleX(0.943);transform-origin:right center;">21.2</div>
<div class="t" style="left:256.41px;top:288.64px;font-size:10px;color:#000;transform:scaleX(0.943);transform-origin:right center;">1.2847</div>
<div class="t" style="left:300.53px;top:288.64px;font-size:10px;color:#000;transform:scaleX(0.943);transform-origin:right center;">31.0</div>
<div class="t" style="left:370.81px;top:288.64px;font-size:10px;color:#000;transform:scaleX(0.943);transform-origin:right center;">73.682</div>
<div class="t" style="left:410.97px;top:288.64px;font-size:10px;color:#000;transform:scaleX(0.943);transform-origin:right center;">0.021</div>
<div class="t" style="left:197.00px;top:288.64px;font-size:10px;color:#000;transform:scaleX(0.899);transform-origin:left center;">Molybdenum</div>
<div class="t" style="left:330.50px;top:288.64px;font-size:10px;color:#000;transform:scaleX(0.915);transform-origin:left center;">( 2 1 1)</div>
<div class="t" style="left:17.82px;top:300.64px;font-size:10px;color:#000;transform:scaleX(0.953);transform-origin:center center;">5</div>
<div class="t" style="left:36.11px;top:300.64px;font-size:10px;color:#000;transform:scaleX(0.943);transform-origin:right center;">87.679</div>
<div class="t" style="left:75.15px;top:300.64px;font-size:10px;color:#000;transform:scaleX(0.967);transform-origin:right center;">1.1121</div>
<div class="t" style="left:131.38px;top:300.64px;font-size:10px;color:#000;transform:scaleX(0.944);transform-origin:right center;">64</div>
<div class="t" style="left:172.50px;top:300.64px;font-size:10px;color:#000;transform:scaleX(0.942);transform-origin:right center;">3.4</div>
<div class="t" style="left:257.15px;top:300.64px;font-size:10px;color:#000;transform:scaleX(0.967);transform-origin:right center;">1.1129</div>
<div class="t" style="left:306.10px;top:300.64px;font-size:10px;color:#000;transform:scaleX(0.942);transform-origin:right center;">9.0</div>
<div class="t" style="left:370.81px;top:300.64px;font-size:10px;color:#000;transform:scaleX(0.943);transform-origin:right center;">87.595</div>
<div class="t" style="left:407.64px;top:300.64px;font-size:10px;color:#000;transform:scaleX(0.952);transform-origin:right center;">-0.084</div>
<div class="t" style="left:197.00px;top:300.64px;font-size:10px;color:#000;transform:scaleX(0.899);transform-origin:left center;">Molybdenum</div>
<div class="t" style="left:330.50px;top:300.64px;font-size:10px;color:#000;transform:scaleX(0.915);transform-origin:left center;">( 2 2 0)</div>
</div></body></html>
